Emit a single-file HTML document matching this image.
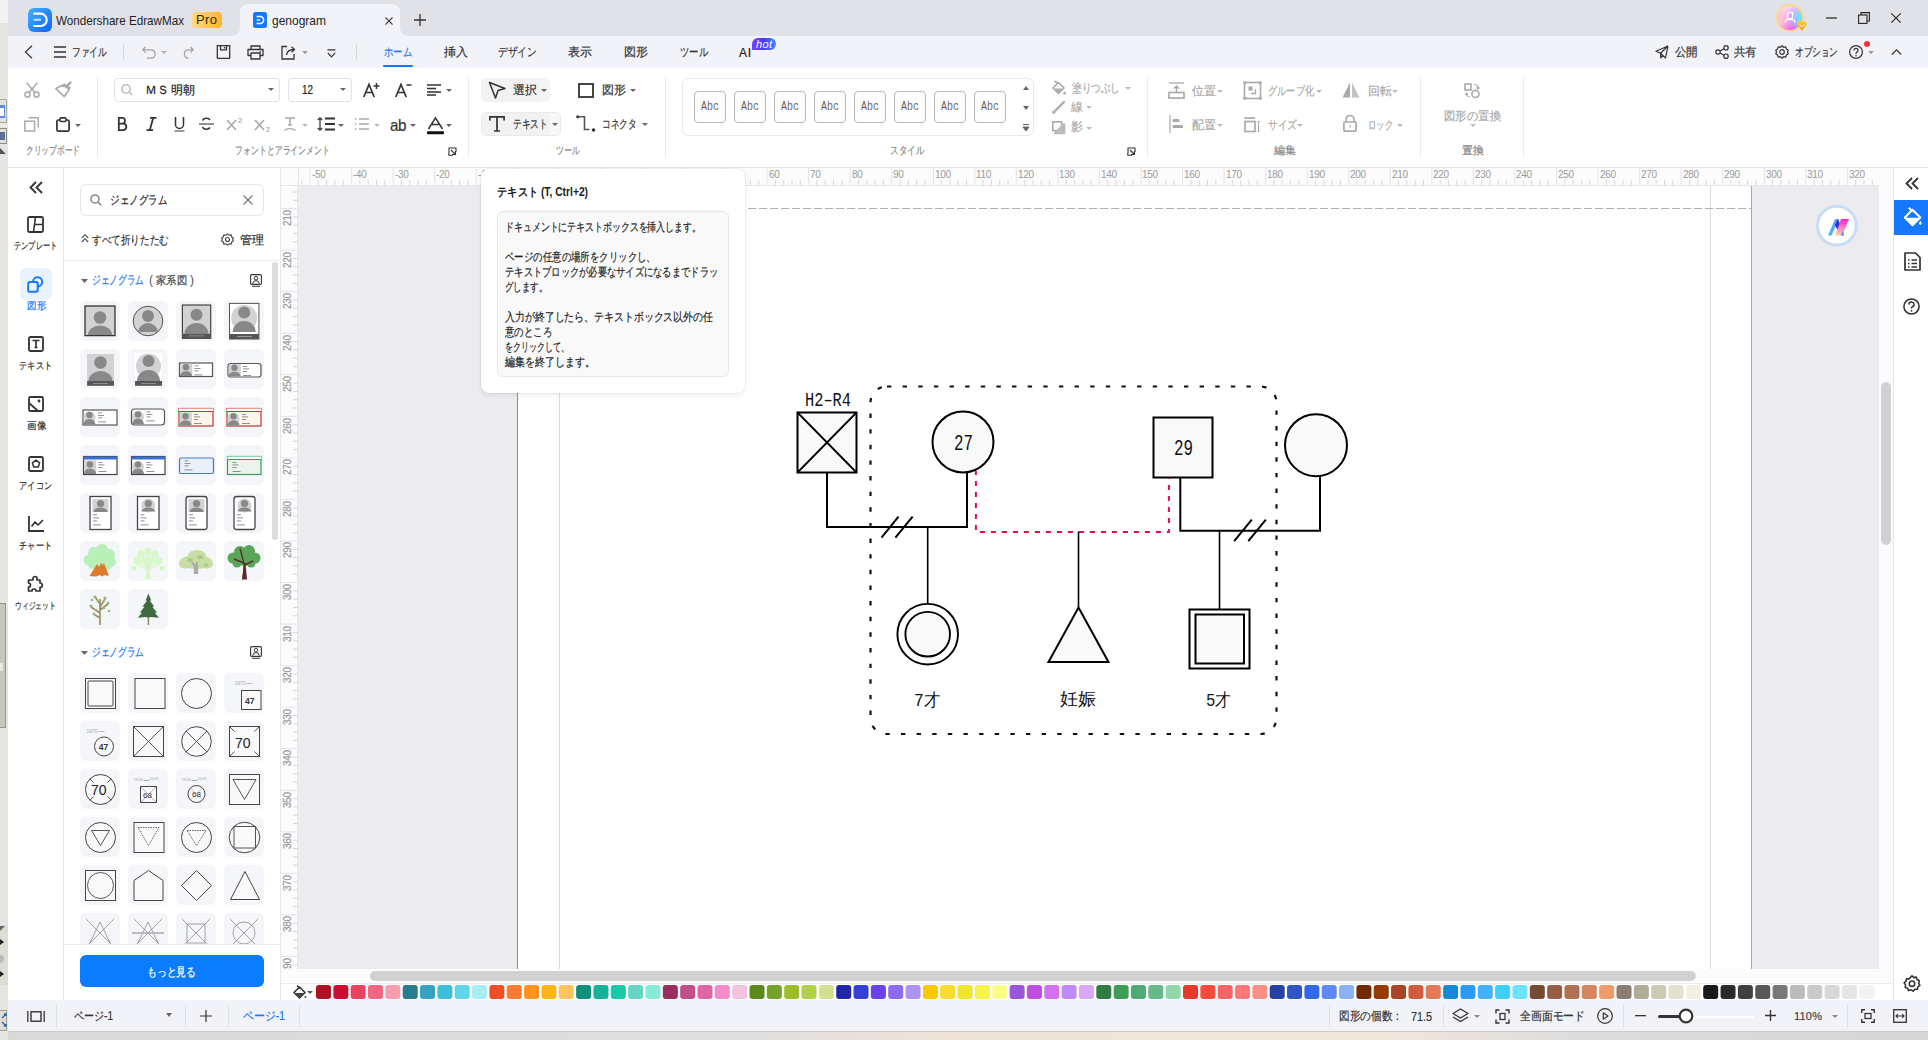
<!DOCTYPE html>
<html><head><meta charset="utf-8">
<style>
*{box-sizing:border-box;margin:0;padding:0}
html,body{width:1928px;height:1040px;overflow:hidden;background:#dadada;font-family:"Liberation Sans",sans-serif;color:#333;position:relative}
.a{position:absolute}
.t{position:absolute;white-space:nowrap;-webkit-text-stroke:0.2px currentColor}
svg{position:absolute;overflow:visible}
</style></head><body>
<div class="a" style="left:0px;top:0px;width:8px;height:23px;background:#f3f3f3;"></div>
<div class="a" style="left:0px;top:23px;width:8px;height:1017px;background:#e6e5e1;"></div>
<div class="a" style="left:8px;top:0px;width:1920px;height:36px;background:#e1e2e7;"></div>
<div class="a" style="left:8px;top:36px;width:1920px;height:32px;background:#f2f3f8;"></div>
<div class="a" style="left:8px;top:68px;width:1920px;height:100px;background:#fff;border-bottom:1px solid #e3e4e8;"></div>
<div class="a" style="left:8px;top:168px;width:56px;height:832px;background:#fff;border-right:1px solid #e6e7eb;"></div>
<div class="a" style="left:64px;top:168px;width:217px;height:832px;background:#fff;border-right:1px solid #e6e7eb;"></div>
<div class="a" style="left:281px;top:168px;width:1598px;height:18px;background:#fcfcfd;border-bottom:1px solid #e6e7eb;"></div>
<div class="a" style="left:281px;top:186px;width:17px;height:783px;background:#fcfcfd;border-right:1px solid #e6e7eb;"></div>
<div class="a" style="left:298px;top:186px;width:1581px;height:783px;background:#ebebf0;"></div>
<div class="a" style="left:517px;top:186px;width:1235px;height:783px;background:#fff;border-left:1px solid #8e8e8e;border-right:1px solid #a8a8a8;"></div>
<div class="a" style="left:559px;top:186px;width:1px;height:783px;background:#dcdcdc;"></div>
<div class="a" style="left:1710px;top:186px;width:1px;height:783px;background:#dcdcdc;"></div>
<svg style="left:748px;top:208px;" width="1003" height="1" viewBox="0 0 1003 1"><line x1="0" y1="0.5" x2="1003" y2="0.5" stroke="#b0b0b0" stroke-width="1.1" stroke-dasharray="8.2 2.8"/></svg>
<div class="a" style="left:1879px;top:168px;width:14px;height:801px;background:#fcfcfd;"></div>
<div class="a" style="left:1881px;top:382px;width:10px;height:163px;background:#d0d1d3;border-radius:5px;"></div>
<div class="a" style="left:281px;top:969px;width:1612px;height:15px;background:#fcfcfd;border-bottom:1px solid #ececf0;"></div>
<div class="a" style="left:370px;top:971px;width:1326px;height:10px;background:#d0d1d3;border-radius:5px;"></div>
<div class="a" style="left:281px;top:984px;width:1612px;height:16px;background:#fff;"></div>
<div class="a" style="left:1893px;top:168px;width:35px;height:832px;background:#fff;border-left:1px solid #e6e7eb;"></div>
<div class="a" style="left:8px;top:1000px;width:1920px;height:32px;background:#f2f3f8;border-bottom:1px solid #c9c9c9;"></div>
<div class="a" style="left:8px;top:1032px;width:1920px;height:8px;background:linear-gradient(to right,#d9d9d9 0%,#dedede 38%,#efe3d9 48%,#f1e6dc 72%,#dcdcdc 82%,#d6d6d6 100%);"></div>
<div class="a" style="left:0px;top:99px;width:7px;height:24px;background:#e3e2dc;border:1px solid #a9a79f;border-left:none;"></div>
<div class="a" style="left:0px;top:105px;width:5px;height:13px;background:#5b8ee0;"></div>
<div class="a" style="left:0px;top:108px;width:4px;height:8px;background:#fff;"></div>
<div class="a" style="left:0px;top:123px;width:7px;height:4px;background:#ecebe7;"></div>
<div class="a" style="left:0px;top:128px;width:7px;height:16px;background:#e0dfd9;border:1px solid #8f8d87;border-left:none;"></div>
<div class="a" style="left:0px;top:132px;width:5px;height:8px;background:#5d6f8f;"></div>
<svg style="left:0px;top:148px;" width="6" height="6" viewBox="0 0 6 6"><path d="M0 0 L6 6 H0 Z" fill="#555"/></svg>
<div class="a" style="left:0px;top:603px;width:6px;height:125px;background:#c7c6bf;border:1px solid #97958e;border-left:none;"></div>
<div class="a" style="left:0px;top:663px;width:3px;height:8px;background:#e8e8e4;"></div>
<div class="a" style="left:0px;top:925px;width:8px;height:60px;background:#dddcd6;"></div>
<svg style="left:0px;top:926px;" width="5" height="5" viewBox="0 0 5 5"><path d="M0 0 H5 L0 5 Z" fill="#666"/></svg>
<svg style="left:0px;top:939px;" width="4" height="6" viewBox="0 0 4 6"><path d="M0 0 L4 3 L0 6 Z" fill="#222"/></svg>
<div class="a" style="left:0px;top:955px;width:4px;height:8px;background:#bbb;border-radius:0 4px 4px 0;"></div>
<svg style="left:0px;top:971px;" width="4" height="6" viewBox="0 0 4 6"><path d="M0 0 L4 3 L0 6 Z" fill="#222"/></svg>
<div class="a" style="left:0px;top:1010px;width:7px;height:21px;background:#dedcd4;border:1px solid #9f9d96;border-left:none;"></div>
<svg style="left:1px;top:1012px;" width="6" height="16" viewBox="0 0 6 16"><path d="M1 6 L5 2 M3 2 H5 V4 M1 10 L5 14 M3 14 H5 V12" stroke="#2f5fa0" stroke-width="1.4" fill="none"/></svg>
<svg style="left:28px;top:8px;" width="24" height="24" viewBox="0 0 24 24"><defs><linearGradient id="lg1" x1="0" y1="0" x2="1" y2="1"><stop offset="0" stop-color="#45b0ff"/><stop offset="1" stop-color="#0866ff"/></linearGradient></defs>
<rect x="0" y="0" width="24" height="24" rx="6" fill="url(#lg1)"/>
<path d="M6.2 5.6 H12.5 A6.2 6.2 0 0 1 12.5 18 H6.2" fill="none" stroke="#fff" stroke-width="2.2" stroke-linecap="round"/>
<path d="M6.5 11.8 H12.2" stroke="#cfe3ff" stroke-width="2" stroke-linecap="round"/></svg>
<div class="t" style="transform:scaleX(0.896);transform-origin:0 0;left:56px;top:14px;font-size:13px;line-height:13px;color:#1f1f1f;-webkit-text-stroke:0;">Wondershare EdrawMax</div>
<svg style="left:192px;top:12px;" width="30" height="16" viewBox="0 0 30 16"><defs><linearGradient id="lg2" x1="0" y1="0" x2="1" y2="0"><stop offset="0" stop-color="#fed985"/><stop offset="1" stop-color="#fdb52c"/></linearGradient></defs><rect width="30" height="16" rx="4" fill="url(#lg2)"/></svg>
<div class="t" style="letter-spacing:0.38px;left:196px;top:13px;font-size:13px;line-height:13px;color:#3a2a00;-webkit-text-stroke:0;">Pro</div>
<svg style="left:232px;top:4px;" width="176" height="32" viewBox="0 0 176 32"><path d="M0 32 A8 8 0 0 0 8 24 V8 A8 8 0 0 1 16 0 H160 A8 8 0 0 1 168 8 V24 A8 8 0 0 0 176 32 Z" fill="#f2f3f8"/></svg>
<svg style="left:253px;top:12px;" width="14" height="16" viewBox="0 0 14 16"><rect x="0" y="0" width="14" height="16" rx="2.5" fill="#1677ff"/>
<path d="M3.6 4.6 H7.2 A3.4 3.4 0 0 1 7.2 11.4 H3.6" fill="none" stroke="#fff" stroke-width="1.5"/><path d="M3.8 8 H7" stroke="#fff" stroke-width="1.3"/></svg>
<div class="t" style="transform:scaleX(0.922);transform-origin:0 0;left:272px;top:14px;font-size:13px;line-height:13px;color:#222;-webkit-text-stroke:0;">genogram</div>
<svg style="left:385px;top:17px;" width="8" height="8" viewBox="0 0 8 8"><path d="M0.5 0.5 L7.5 7.5 M7.5 0.5 L0.5 7.5" stroke="#444" stroke-width="1.1"/></svg>
<svg style="left:414px;top:14px;" width="12" height="12" viewBox="0 0 12 12"><path d="M6 0 V12 M0 6 H12" stroke="#333" stroke-width="1.3"/></svg>
<svg style="left:1776px;top:4px;" width="34" height="30" viewBox="0 0 34 30"><defs><linearGradient id="lg3" x1="0.3" y1="0" x2="0.5" y2="1"><stop offset="0" stop-color="#fbe6fb"/><stop offset="0.5" stop-color="#f6a0e8"/><stop offset="1" stop-color="#ee50f2"/></linearGradient>
<radialGradient id="lg3b" cx="1" cy="0.5" r="0.7"><stop offset="0" stop-color="#40ffff" stop-opacity="1"/><stop offset="0.45" stop-color="#8ad0ff" stop-opacity="0.7"/><stop offset="1" stop-color="#c0a0ff" stop-opacity="0"/></radialGradient>
<radialGradient id="lg3c" cx="0" cy="0.7" r="0.6"><stop offset="0" stop-color="#ffd8c8" stop-opacity="0.9"/><stop offset="1" stop-color="#ffd8c8" stop-opacity="0"/></radialGradient>
<linearGradient id="lg4" x1="0" y1="0" x2="0" y2="1"><stop offset="0" stop-color="#ffd43a"/><stop offset="1" stop-color="#ff9500"/></linearGradient></defs>
<circle cx="14" cy="14" r="13" fill="url(#lg3)" stroke="#fdd98c" stroke-width="2"/>
<circle cx="14" cy="14" r="12" fill="url(#lg3b)"/>
<circle cx="14" cy="14" r="12" fill="url(#lg3c)"/>
<path d="M13 8.6 H16.6 V12.4 A2.4 2.4 0 0 1 14.2 14.8 H13.8 A2.4 2.4 0 0 1 11.4 12.4 V10.8 A2.2 2.2 0 0 1 13 8.6 Z" fill="none" stroke="#fff" stroke-width="1.1"/>
<path d="M9.2 19 V18.2 A2.6 2.6 0 0 1 11.8 15.6 H16.2 A2.6 2.6 0 0 1 18.8 18.2 V19" fill="none" stroke="#fff" stroke-width="1.1"/>
<path d="M22.5 17 L29 17 L31 20 L26 27 L21 20 Z" fill="url(#lg4)"/>
<path d="M23.6 20.6 L26 23 L28.4 20.6" fill="none" stroke="#fff" stroke-width="1"/></svg>
<svg style="left:1826px;top:17px;" width="11" height="2" viewBox="0 0 11 2"><rect width="11" height="1.2" y="0.4" fill="#222"/></svg>
<svg style="left:1858px;top:12px;" width="12" height="12" viewBox="0 0 12 12"><rect x="0.6" y="3" width="8.4" height="8.4" fill="none" stroke="#222" stroke-width="1.1"/><path d="M3 3 V0.6 H11.4 V9 H9" fill="none" stroke="#222" stroke-width="1.1"/></svg>
<svg style="left:1891px;top:13px;" width="10" height="10" viewBox="0 0 10 10"><path d="M0.3 0.3 L9.7 9.7 M9.7 0.3 L0.3 9.7" stroke="#222" stroke-width="1.1"/></svg>
<svg style="left:24px;top:45px;" width="9" height="14" viewBox="0 0 9 14"><path d="M8 0.8 L1.5 7 L8 13.2" fill="none" stroke="#333" stroke-width="1.2"/></svg>
<svg style="left:54px;top:46px;" width="12" height="12" viewBox="0 0 12 12"><path d="M0 1 H12 M0 6 H12 M0 11 H12" stroke="#333" stroke-width="1.3"/></svg>
<div class="t" style="transform:scaleX(0.729);transform-origin:0 0;left:72px;top:46px;font-size:12px;line-height:12px;color:#333;">ファイル</div>
<div class="a" style="left:123px;top:44px;width:1px;height:16px;background:#d6d7db;"></div>
<svg style="left:142px;top:46px;" width="15" height="12" viewBox="0 0 15 12"><path d="M3.5 1 L0.8 3.8 L3.5 6.6 M1 3.8 H9 A4.2 4.2 0 0 1 9 12.2 H5" fill="none" stroke="#a0a0a0" stroke-width="1.2"/></svg>
<svg style="left:161px;top:51px;" width="6" height="3" viewBox="0 0 6 3"><path d="M0 0 H6 L3 3 Z" fill="#b0b0b0"/></svg>
<svg style="left:184px;top:46px;" width="10" height="12" viewBox="0 0 10 12"><path d="M6.5 1 L9.2 3.8 L6.5 6.6 M9 3.8 H4.5 A4.2 4.2 0 0 0 4.5 12.2" fill="none" stroke="#a0a0a0" stroke-width="1.2"/></svg>
<svg style="left:216px;top:45px;" width="15" height="14" viewBox="0 0 15 14"><path d="M1.3 0.7 H13.7 V12.7 A0.6 0.6 0 0 1 13.1 13.3 H1.9 A0.6 0.6 0 0 1 1.3 12.7 Z M4.5 0.7 V4.8 H10.5 V0.7 M8.5 2 V3.6" fill="none" stroke="#333" stroke-width="1.3"/></svg>
<svg style="left:247px;top:45px;" width="17" height="15" viewBox="0 0 17 15"><path d="M4 4.5 V1 H13 V4.5 M4 10.5 H1 V4.5 H16 V10.5 H13 M4 8 H13 V14 H4 Z" fill="none" stroke="#333" stroke-width="1.3" stroke-linejoin="round"/><circle cx="13.3" cy="6.8" r="0.7" fill="#333"/></svg>
<svg style="left:281px;top:45px;" width="15" height="15" viewBox="0 0 15 15"><path d="M6 1.5 H1 V14 H13 V9" fill="none" stroke="#333" stroke-width="1.3"/><path d="M5.5 10 C6 6 8.5 4.5 13 4.5 M10.5 1.8 L13.5 4.5 L10.5 7.2" fill="none" stroke="#333" stroke-width="1.3"/></svg>
<svg style="left:302px;top:51px;" width="6" height="3" viewBox="0 0 6 3"><path d="M0 0 H6 L3 3 Z" fill="#999"/></svg>
<svg style="left:327px;top:49px;" width="9" height="9" viewBox="0 0 9 9"><path d="M0.5 0.8 H8.5 M0.8 3.8 L4.5 7.8 L8.2 3.8" fill="none" stroke="#333" stroke-width="1.2"/></svg>
<div class="a" style="left:356px;top:44px;width:1px;height:16px;background:#d6d7db;"></div>
<div class="t" style="transform:scaleX(0.778);transform-origin:0 0;left:384px;top:46px;font-size:12px;line-height:12px;color:#1677ff;">ホーム</div>
<div class="a" style="left:383px;top:65px;width:30px;height:2px;background:#1677ff;border-radius:1px;"></div>
<div class="t" style="letter-spacing:0.00px;left:444px;top:46px;font-size:12px;line-height:12px;color:#333;">挿入</div>
<div class="t" style="transform:scaleX(0.812);transform-origin:0 0;left:498px;top:46px;font-size:12px;line-height:12px;color:#333;">デザイン</div>
<div class="t" style="letter-spacing:0.00px;left:568px;top:46px;font-size:12px;line-height:12px;color:#333;">表示</div>
<div class="t" style="letter-spacing:0.00px;left:624px;top:46px;font-size:12px;line-height:12px;color:#333;">図形</div>
<div class="t" style="transform:scaleX(0.778);transform-origin:0 0;left:680px;top:46px;font-size:12px;line-height:12px;color:#333;">ツール</div>
<div class="t" style="letter-spacing:0.66px;left:739px;top:47px;font-size:12px;line-height:12px;color:#222;">AI</div>
<svg style="left:752px;top:38px;" width="24" height="12" viewBox="0 0 24 12"><defs><linearGradient id="hotg" x1="0" y1="0" x2="1" y2="0"><stop offset="0" stop-color="#7a3cff"/><stop offset="0.5" stop-color="#4a3cff"/><stop offset="1" stop-color="#3a8aff"/></linearGradient></defs><path d="M0 6 A6 6 0 0 1 6 0 H18 A6 6 0 0 1 18 12 H0 Z" fill="url(#hotg)"/></svg>
<div class="t" style="letter-spacing:0.35px;left:756px;top:39px;font-size:11px;line-height:11px;color:#fff;font-style:italic;-webkit-text-stroke:0;">hot</div>
<svg style="left:1655px;top:45px;" width="14" height="14" viewBox="0 0 14 14"><path d="M13 1 L1 6.2 L5.5 8.3 L5.8 13 L8 9.8 M13 1 L5.5 8.3 M13 1 L10.5 13 L5.5 8.3" fill="none" stroke="#333" stroke-width="1.2" stroke-linejoin="round"/></svg>
<div class="t" style="transform:scaleX(0.958);transform-origin:0 0;left:1675px;top:46px;font-size:12px;line-height:12px;color:#333;">公開</div>
<svg style="left:1715px;top:45px;" width="14" height="14" viewBox="0 0 14 14"><circle cx="3" cy="7" r="2.2" fill="none" stroke="#333" stroke-width="1.2"/><circle cx="11" cy="2.8" r="2.2" fill="none" stroke="#333" stroke-width="1.2"/><circle cx="11" cy="11.2" r="2.2" fill="none" stroke="#333" stroke-width="1.2"/><path d="M5 6 L9 3.8 M5 8 L9 10.2" stroke="#333" stroke-width="1.2"/></svg>
<div class="t" style="transform:scaleX(0.958);transform-origin:0 0;left:1734px;top:46px;font-size:12px;line-height:12px;color:#333;">共有</div>
<svg style="left:1775px;top:45px;" width="14" height="14" viewBox="0 0 14 14"><path d="M7 0.8 L8.6 2.3 L10.8 1.9 L11.4 4 L13.3 5.2 L12.4 7 L13.3 8.8 L11.4 10 L10.8 12.1 L8.6 11.7 L7 13.2 L5.4 11.7 L3.2 12.1 L2.6 10 L0.7 8.8 L1.6 7 L0.7 5.2 L2.6 4 L3.2 1.9 L5.4 2.3 Z" fill="none" stroke="#333" stroke-width="1.2" stroke-linejoin="round"/><circle cx="7" cy="7" r="2.3" fill="none" stroke="#333" stroke-width="1.2"/></svg>
<div class="t" style="transform:scaleX(0.717);transform-origin:0 0;left:1795px;top:46px;font-size:12px;line-height:12px;color:#333;">オプション</div>
<svg style="left:1849px;top:45px;" width="14" height="14" viewBox="0 0 14 14"><circle cx="7" cy="7" r="6.4" fill="none" stroke="#333" stroke-width="1.2"/><path d="M4.9 5.4 A2.1 2.1 0 1 1 7.6 7.4 C7 7.7 7 8.2 7 8.9" fill="none" stroke="#333" stroke-width="1.2"/><circle cx="7" cy="10.7" r="0.8" fill="#333"/></svg>
<svg style="left:1864px;top:41px;" width="6" height="6" viewBox="0 0 6 6"><circle cx="3" cy="3" r="3" fill="#f5323c"/></svg>
<svg style="left:1868px;top:51px;" width="6" height="3" viewBox="0 0 6 3"><path d="M0 0 H6 L3 3 Z" fill="#999"/></svg>
<svg style="left:1891px;top:49px;" width="11" height="6" viewBox="0 0 11 6"><path d="M0.8 5.5 L5.5 0.8 L10.2 5.5" fill="none" stroke="#333" stroke-width="1.2"/></svg>
<div class="a" style="left:97px;top:78px;width:1px;height:80px;background:#ececef;"></div>
<div class="a" style="left:468px;top:78px;width:1px;height:80px;background:#ececef;"></div>
<div class="a" style="left:665px;top:78px;width:1px;height:80px;background:#ececef;"></div>
<div class="a" style="left:1147px;top:78px;width:1px;height:80px;background:#ececef;"></div>
<div class="a" style="left:1420px;top:78px;width:1px;height:80px;background:#ececef;"></div>
<div class="a" style="left:1523px;top:78px;width:1px;height:80px;background:#ececef;"></div>
<svg style="left:24px;top:82px;" width="16" height="16" viewBox="0 0 16 16"><circle cx="3.5" cy="12.5" r="2.6" fill="none" stroke="#aaa" stroke-width="1.5"/><circle cx="12.5" cy="12.5" r="2.6" fill="none" stroke="#aaa" stroke-width="1.5"/><path d="M5 10.5 L13.5 0.8 M11 10.5 L2.5 0.8" stroke="#aaa" stroke-width="1.5"/></svg>
<svg style="left:55px;top:81px;" width="17" height="17" viewBox="0 0 17 17"><path d="M0.9 7.6 L8 4 L14.2 8.4 L9.3 15.6 Z" fill="none" stroke="#aaa" stroke-width="1.7" stroke-linejoin="round"/><path d="M7.5 3.8 L14.5 8.5 L15.8 6.6 L9.2 2.2 Z" fill="#aaa"/><path d="M12.8 4.2 L15.3 1.6" stroke="#aaa" stroke-width="2.6" stroke-linecap="round"/></svg>
<svg style="left:24px;top:117px;" width="15" height="15" viewBox="0 0 15 15"><rect x="0.8" y="4.2" width="9.8" height="9.8" fill="none" stroke="#aaa" stroke-width="1.5"/><path d="M4.6 0.8 H14.2 V10.6" fill="none" stroke="#aaa" stroke-width="1.5"/></svg>
<svg style="left:56px;top:117px;" width="14" height="15" viewBox="0 0 14 15"><rect x="0.9" y="3" width="12.2" height="11.2" rx="1.5" fill="none" stroke="#333" stroke-width="1.7"/><rect x="4" y="0.9" width="6" height="3.6" rx="1" fill="#fff" stroke="#333" stroke-width="1.6"/></svg>
<svg style="left:75px;top:124px;" width="6" height="3" viewBox="0 0 6 3"><path d="M0 0 H6 L3 3 Z" fill="#666"/></svg>
<div class="t" style="transform:scaleX(0.701);transform-origin:0 0;left:26px;top:145px;font-size:11px;line-height:11px;color:#888;">クリップボード</div>
<div class="a" style="left:114px;top:78px;width:166px;height:24px;background:#fff;border:1px solid #e2e2e6;border-radius:4px;"></div>
<svg style="left:121px;top:84px;" width="12" height="12" viewBox="0 0 12 12"><circle cx="5" cy="5" r="4.2" fill="none" stroke="#bbb" stroke-width="1.5"/><path d="M8 8 L11 11" stroke="#bbb" stroke-width="1.6"/></svg>
<div class="t" style="letter-spacing:-0.34px;left:145px;top:84px;font-size:12px;line-height:12px;color:#222;">ＭＳ 明朝</div>
<svg style="left:268px;top:88px;" width="6" height="3" viewBox="0 0 6 3"><path d="M0 0 H6 L3 3 Z" fill="#666"/></svg>
<div class="a" style="left:288px;top:78px;width:64px;height:24px;background:#fff;border:1px solid #e2e2e6;border-radius:4px;"></div>
<div class="t" style="transform:scaleX(0.823);transform-origin:0 0;left:302px;top:84px;font-size:12px;line-height:12px;color:#222;">12</div>
<svg style="left:340px;top:88px;" width="6" height="3" viewBox="0 0 6 3"><path d="M0 0 H6 L3 3 Z" fill="#666"/></svg>
<svg style="left:363px;top:83px;" width="17" height="15" viewBox="0 0 17 15"><path d="M0.8 14 L6 1.5 L11.2 14 M2.8 9.5 H9.2" fill="none" stroke="#333" stroke-width="1.7"/><path d="M13.5 0 V6 M10.5 3 H16.5" stroke="#333" stroke-width="1.5"/></svg>
<svg style="left:395px;top:83px;" width="17" height="15" viewBox="0 0 17 15"><path d="M0.8 14 L6 1.5 L11.2 14 M2.8 9.5 H9.2" fill="none" stroke="#333" stroke-width="1.7"/><path d="M11.5 2 H16.5" stroke="#333" stroke-width="1.5"/></svg>
<svg style="left:427px;top:84px;" width="15" height="12" viewBox="0 0 15 12"><path d="M0 1 H14 M0 4.5 H9 M0 8 H14 M0 11 H9" stroke="#333" stroke-width="1.5"/></svg>
<svg style="left:446px;top:89px;" width="6" height="3" viewBox="0 0 6 3"><path d="M0 0 H6 L3 3 Z" fill="#666"/></svg>
<svg style="left:117px;top:117px;" width="11" height="14" viewBox="0 0 11 14"><path d="M1.8 0.9 H6 A3 3 0 0 1 6 6.6 H1.8 Z M1.8 6.6 H6.6 A3.3 3.3 0 0 1 6.6 13.1 H1.8 Z" fill="none" stroke="#333" stroke-width="1.8"/></svg>
<svg style="left:146px;top:117px;" width="11" height="14" viewBox="0 0 11 14"><path d="M4 0.9 H10.5 M0.5 13.1 H7 M7.2 0.9 L3.8 13.1" stroke="#333" stroke-width="1.8"/></svg>
<svg style="left:174px;top:117px;" width="11" height="15" viewBox="0 0 11 15"><path d="M1.5 0 V7.5 A4 4 0 0 0 9.5 7.5 V0" fill="none" stroke="#333" stroke-width="1.5"/><path d="M0.5 14 H10.5" stroke="#333" stroke-width="1"/></svg>
<svg style="left:199px;top:117px;" width="15" height="14" viewBox="0 0 15 14"><path d="M11 3 A4 3 0 0 0 3.5 3.5 M3.5 10 A4 3 0 0 0 11 10.5" fill="none" stroke="#333" stroke-width="1.6"/><path d="M0 7 H15" stroke="#333" stroke-width="1.1"/></svg>
<svg style="left:226px;top:119px;" width="17" height="12" viewBox="0 0 17 12"><path d="M1 1 L10 11 M10 1 L1 11" stroke="#aaa" stroke-width="1.7"/></svg>
<div class="t" style="left:238px;top:117px;font-size:7px;line-height:7px;color:#aaa;">2</div>
<svg style="left:254px;top:119px;" width="17" height="12" viewBox="0 0 17 12"><path d="M1 1 L10 11 M10 1 L1 11" stroke="#aaa" stroke-width="1.7"/></svg>
<div class="t" style="left:266px;top:126px;font-size:7px;line-height:7px;color:#aaa;">2</div>
<svg style="left:284px;top:117px;" width="12" height="14" viewBox="0 0 12 14"><path d="M1 1 H11 M6 1 V8 M4 8 H8" stroke="#aaa" stroke-width="1.6"/><path d="M0.5 13.5 A6 3 0 0 1 11.5 13.5" fill="none" stroke="#aaa" stroke-width="1.2"/></svg>
<svg style="left:302px;top:124px;" width="6" height="3" viewBox="0 0 6 3"><path d="M0 0 H6 L3 3 Z" fill="#bbb"/></svg>
<svg style="left:317px;top:117px;" width="18" height="14" viewBox="0 0 18 14"><path d="M3 0.8 V13.2 M0.8 3 L3 0.8 L5.2 3 M0.8 11 L3 13.2 L5.2 11" fill="none" stroke="#333" stroke-width="1.2"/><path d="M8 1.5 H18 M8 7 H18 M8 12.5 H18" stroke="#333" stroke-width="1.8"/></svg>
<svg style="left:338px;top:124px;" width="6" height="3" viewBox="0 0 6 3"><path d="M0 0 H6 L3 3 Z" fill="#666"/></svg>
<svg style="left:355px;top:118px;" width="15" height="12" viewBox="0 0 15 12"><path d="M0 1 H1.5 M4 1 H14 M0 6 H1.5 M4 6 H14 M0 11 H1.5 M4 11 H14" stroke="#aaa" stroke-width="1.5"/></svg>
<svg style="left:374px;top:124px;" width="6" height="3" viewBox="0 0 6 3"><path d="M0 0 H6 L3 3 Z" fill="#bbb"/></svg>
<div class="t" style="transform:scaleX(0.893);transform-origin:0 0;left:390px;top:117px;font-size:17px;line-height:17px;color:#333;letter-spacing:-0.5px;">ab</div>
<svg style="left:410px;top:124px;" width="6" height="3" viewBox="0 0 6 3"><path d="M0 0 H6 L3 3 Z" fill="#666"/></svg>
<svg style="left:427px;top:117px;" width="17" height="18" viewBox="0 0 17 18"><path d="M1.5 12 L8.5 0.8 L15.5 12 M4.5 7.5 H12.5" fill="none" stroke="#333" stroke-width="1.5"/><rect x="0" y="14.2" width="17" height="3" rx="1" fill="#111"/></svg>
<svg style="left:446px;top:124px;" width="6" height="3" viewBox="0 0 6 3"><path d="M0 0 H6 L3 3 Z" fill="#666"/></svg>
<svg style="left:448px;top:147px;" width="9" height="9" viewBox="0 0 9 9"><path d="M1 6 V1 H8 V5 M3 3 L7 7 M4 7.5 H7.5 V4" fill="none" stroke="#333" stroke-width="1.1"/><path d="M0.8 6 V8.2 H5" fill="none" stroke="#333" stroke-width="1.1"/></svg>
<div class="t" style="transform:scaleX(0.720);transform-origin:0 0;left:235px;top:145px;font-size:11px;line-height:11px;color:#888;">フォントとアラインメント</div>
<div class="a" style="left:481px;top:78px;width:69px;height:24px;background:#f2f2f3;border-radius:5px;"></div>
<div class="a" style="left:539px;top:78px;width:11px;height:24px;background:#f5f5f6;border-radius:0 5px 5px 0;"></div>
<svg style="left:488px;top:81px;" width="19" height="19" viewBox="0 0 19 19"><path d="M1.5 1.5 L17 7.5 L10 9.5 L7.5 17 Z" fill="none" stroke="#333" stroke-width="1.5" stroke-linejoin="round"/></svg>
<div class="t" style="letter-spacing:0.00px;left:513px;top:84px;font-size:12px;line-height:12px;color:#333;">選択</div>
<svg style="left:541px;top:89px;" width="6" height="3" viewBox="0 0 6 3"><path d="M0 0 H6 L3 3 Z" fill="#666"/></svg>
<div class="a" style="left:481px;top:112px;width:80px;height:24px;background:#f2f2f3;border:1px solid #eaeaea;border-radius:5px;"></div>
<div class="a" style="left:550px;top:113px;width:10px;height:22px;background:#f7f7f8;border-radius:0 4px 4px 0;"></div>
<svg style="left:489px;top:116px;" width="16" height="16" viewBox="0 0 16 16"><path d="M0.9 4.5 V0.9 H15.1 V4.5 M8 0.9 V15 M5 15 H11" fill="none" stroke="#333" stroke-width="1.7"/></svg>
<div class="t" style="transform:scaleX(0.729);transform-origin:0 0;left:513px;top:118px;font-size:12px;line-height:12px;color:#333;">テキスト</div>
<svg style="left:552px;top:123px;" width="6" height="3" viewBox="0 0 6 3"><path d="M0 0 H6 L3 3 Z" fill="#666"/></svg>
<svg style="left:578px;top:83px;" width="16" height="15" viewBox="0 0 16 15"><rect x="1" y="1" width="14" height="13" fill="none" stroke="#333" stroke-width="1.8"/></svg>
<div class="t" style="letter-spacing:0.00px;left:602px;top:84px;font-size:12px;line-height:12px;color:#333;">図形</div>
<svg style="left:630px;top:89px;" width="6" height="3" viewBox="0 0 6 3"><path d="M0 0 H6 L3 3 Z" fill="#666"/></svg>
<svg style="left:576px;top:115px;" width="20" height="18" viewBox="0 0 20 18"><circle cx="1.8" cy="1.8" r="1.6" fill="#333"/><path d="M1.8 1.8 H8.5 V14.5 H13.5" fill="none" stroke="#555" stroke-width="1.6"/><circle cx="17.5" cy="15" r="1.8" fill="#333"/></svg>
<div class="t" style="transform:scaleX(0.729);transform-origin:0 0;left:602px;top:118px;font-size:12px;line-height:12px;color:#333;">コネクタ</div>
<svg style="left:642px;top:123px;" width="6" height="3" viewBox="0 0 6 3"><path d="M0 0 H6 L3 3 Z" fill="#666"/></svg>
<div class="t" style="transform:scaleX(0.727);transform-origin:0 0;left:556px;top:145px;font-size:11px;line-height:11px;color:#888;">ツール</div>
<div class="a" style="left:682px;top:78px;width:352px;height:58px;background:#fff;border:1px solid #e8e8ea;border-radius:6px;"></div>
<div class="a" style="left:694px;top:91px;width:32px;height:32px;background:#fdfdfd;border:1px solid #b9b9b9;border-radius:4px;"></div>
<div class="t" style="transform:scaleX(0.833);transform-origin:0 0;left:701px;top:101px;font-size:12px;line-height:12px;color:#555;font-family:'Liberation Mono',sans-serif;-webkit-text-stroke:0.1px #fff;">Abc</div>
<div class="a" style="left:734px;top:91px;width:32px;height:32px;background:#fdfdfd;border:1px solid #b9b9b9;border-radius:4px;"></div>
<div class="t" style="transform:scaleX(0.833);transform-origin:0 0;left:741px;top:101px;font-size:12px;line-height:12px;color:#555;font-family:'Liberation Mono',sans-serif;-webkit-text-stroke:0.1px #fff;">Abc</div>
<div class="a" style="left:774px;top:91px;width:32px;height:32px;background:#fdfdfd;border:1px solid #b9b9b9;border-radius:4px;"></div>
<div class="t" style="transform:scaleX(0.833);transform-origin:0 0;left:781px;top:101px;font-size:12px;line-height:12px;color:#555;font-family:'Liberation Mono',sans-serif;-webkit-text-stroke:0.1px #fff;">Abc</div>
<div class="a" style="left:814px;top:91px;width:32px;height:32px;background:#fdfdfd;border:1px solid #b9b9b9;border-radius:4px;"></div>
<div class="t" style="transform:scaleX(0.833);transform-origin:0 0;left:821px;top:101px;font-size:12px;line-height:12px;color:#555;font-family:'Liberation Mono',sans-serif;-webkit-text-stroke:0.1px #fff;">Abc</div>
<div class="a" style="left:854px;top:91px;width:32px;height:32px;background:#fdfdfd;border:1px solid #b9b9b9;border-radius:4px;"></div>
<div class="t" style="transform:scaleX(0.833);transform-origin:0 0;left:861px;top:101px;font-size:12px;line-height:12px;color:#555;font-family:'Liberation Mono',sans-serif;-webkit-text-stroke:0.1px #fff;">Abc</div>
<div class="a" style="left:894px;top:91px;width:32px;height:32px;background:#fdfdfd;border:1px solid #b9b9b9;border-radius:4px;"></div>
<div class="t" style="transform:scaleX(0.833);transform-origin:0 0;left:901px;top:101px;font-size:12px;line-height:12px;color:#555;font-family:'Liberation Mono',sans-serif;-webkit-text-stroke:0.1px #fff;">Abc</div>
<div class="a" style="left:934px;top:91px;width:32px;height:32px;background:#fdfdfd;border:1px solid #b9b9b9;border-radius:4px;"></div>
<div class="t" style="transform:scaleX(0.833);transform-origin:0 0;left:941px;top:101px;font-size:12px;line-height:12px;color:#555;font-family:'Liberation Mono',sans-serif;-webkit-text-stroke:0.1px #fff;">Abc</div>
<div class="a" style="left:974px;top:91px;width:32px;height:32px;background:#fdfdfd;border:1px solid #b9b9b9;border-radius:4px;"></div>
<div class="t" style="transform:scaleX(0.833);transform-origin:0 0;left:981px;top:101px;font-size:12px;line-height:12px;color:#555;font-family:'Liberation Mono',sans-serif;-webkit-text-stroke:0.1px #fff;">Abc</div>
<svg style="left:1023px;top:86px;" width="6" height="4" viewBox="0 0 6 4"><path d="M0 4 H6 L3 0 Z" fill="#666"/></svg>
<svg style="left:1023px;top:106px;" width="6" height="4" viewBox="0 0 6 4"><path d="M0 0 H6 L3 4 Z" fill="#666"/></svg>
<svg style="left:1023px;top:124px;" width="6" height="7" viewBox="0 0 6 7"><path d="M0 0.5 H6 M0 3 H6 L3 7 Z" stroke="#666" stroke-width="1" fill="#666"/></svg>
<div class="t" style="transform:scaleX(0.773);transform-origin:0 0;left:890px;top:145px;font-size:11px;line-height:11px;color:#888;">スタイル</div>
<svg style="left:1052px;top:80px;" width="14" height="15" viewBox="0 0 14 15"><path d="M2.5 1 L6 3.5 M1 8 L6.5 2.5 L12 8 L6.5 13.5 Z" fill="none" stroke="#aaa" stroke-width="1.6" stroke-linejoin="round"/><path d="M2 8.5 H11 L6.5 13 Z" fill="#aaa"/><circle cx="12.5" cy="13" r="1.5" fill="#aaa"/></svg>
<div class="t" style="transform:scaleX(0.800);transform-origin:0 0;left:1072px;top:82px;font-size:12px;line-height:12px;color:#aaa;">塗りつぶし</div>
<svg style="left:1125px;top:87px;" width="6" height="3" viewBox="0 0 6 3"><path d="M0 0 H6 L3 3 Z" fill="#bbb"/></svg>
<svg style="left:1052px;top:101px;" width="13" height="13" viewBox="0 0 13 13"><path d="M12 1 L3.5 9.5" stroke="#aaa" stroke-width="2.4" stroke-linecap="round"/><circle cx="1.8" cy="11.2" r="1.6" fill="#aaa"/></svg>
<div class="t" style="left:1071px;top:101px;font-size:12px;line-height:12px;color:#aaa;">線</div>
<svg style="left:1086px;top:106px;" width="6" height="3" viewBox="0 0 6 3"><path d="M0 0 H6 L3 3 Z" fill="#bbb"/></svg>
<svg style="left:1052px;top:121px;" width="13" height="13" viewBox="0 0 13 13"><rect x="0.8" y="0.8" width="8.8" height="8.8" fill="none" stroke="#aaa" stroke-width="1.6"/><path d="M10.6 3 H12.5 V12.5 H3 V10.6" fill="#bbb" stroke="#bbb" stroke-width="1.6"/></svg>
<div class="t" style="left:1071px;top:121px;font-size:12px;line-height:12px;color:#aaa;">影</div>
<svg style="left:1086px;top:127px;" width="6" height="3" viewBox="0 0 6 3"><path d="M0 0 H6 L3 3 Z" fill="#bbb"/></svg>
<svg style="left:1127px;top:147px;" width="9" height="9" viewBox="0 0 9 9"><path d="M1 6 V1 H8 V5 M3 3 L7 7 M4 7.5 H7.5 V4" fill="none" stroke="#333" stroke-width="1.1"/><path d="M0.8 6 V8.2 H5" fill="none" stroke="#333" stroke-width="1.1"/></svg>
<svg style="left:1168px;top:82px;" width="17" height="17" viewBox="0 0 17 17"><path d="M1 1 H16" stroke="#aaa" stroke-width="1.3"/><rect x="1" y="10.5" width="15" height="5.5" fill="none" stroke="#aaa" stroke-width="1.7"/><path d="M8.5 10 V4 M6 6.5 L8.5 4 L11 6.5" fill="none" stroke="#aaa" stroke-width="1.5"/></svg>
<div class="t" style="letter-spacing:0.00px;left:1192px;top:85px;font-size:12px;line-height:12px;color:#aaa;">位置</div>
<svg style="left:1217px;top:90px;" width="6" height="3" viewBox="0 0 6 3"><path d="M0 0 H6 L3 3 Z" fill="#bbb"/></svg>
<svg style="left:1243px;top:81px;" width="19" height="19" viewBox="0 0 19 19"><rect x="1.5" y="1.5" width="16" height="16" fill="none" stroke="#aaa" stroke-width="1.6"/><circle cx="1.8" cy="1.8" r="1.6" fill="#aaa"/><circle cx="17.2" cy="1.8" r="1.6" fill="#aaa"/><circle cx="1.8" cy="17.2" r="1.6" fill="#aaa"/><circle cx="17.2" cy="17.2" r="1.6" fill="#aaa"/><rect x="5.5" y="5.5" width="4" height="4" fill="#aaa"/><path d="M8 12.5 H12.5 V8" fill="none" stroke="#aaa" stroke-width="1.4"/></svg>
<div class="t" style="transform:scaleX(0.767);transform-origin:0 0;left:1268px;top:85px;font-size:12px;line-height:12px;color:#aaa;">グループ化</div>
<svg style="left:1316px;top:90px;" width="6" height="3" viewBox="0 0 6 3"><path d="M0 0 H6 L3 3 Z" fill="#bbb"/></svg>
<svg style="left:1169px;top:115px;" width="15" height="18" viewBox="0 0 15 18"><path d="M1 0 V18" stroke="#bbb" stroke-width="1.5"/><rect x="3.5" y="4" width="7" height="3" rx="1" fill="#aaa"/><rect x="3.5" y="10" width="10.5" height="3" rx="1" fill="#aaa"/></svg>
<div class="t" style="letter-spacing:0.00px;left:1192px;top:119px;font-size:12px;line-height:12px;color:#aaa;">配置</div>
<svg style="left:1217px;top:124px;" width="6" height="3" viewBox="0 0 6 3"><path d="M0 0 H6 L3 3 Z" fill="#bbb"/></svg>
<svg style="left:1244px;top:116px;" width="17" height="17" viewBox="0 0 17 17"><path d="M1 1 V2.5 H10.5 V1 M1 1.75 H10.5" fill="none" stroke="#aaa" stroke-width="1"/><rect x="1" y="5.5" width="10" height="10" fill="none" stroke="#aaa" stroke-width="1.7"/><path d="M14.5 5 V16 M13.3 5.5 H15.7 M13.3 15.5 H15.7" stroke="#aaa" stroke-width="1"/></svg>
<div class="t" style="transform:scaleX(0.806);transform-origin:0 0;left:1268px;top:119px;font-size:12px;line-height:12px;color:#aaa;">サイズ</div>
<svg style="left:1297px;top:124px;" width="6" height="3" viewBox="0 0 6 3"><path d="M0 0 H6 L3 3 Z" fill="#bbb"/></svg>
<div class="t" style="letter-spacing:0.00px;left:1274px;top:145px;font-size:11px;line-height:11px;color:#888;">編集</div>
<svg style="left:1342px;top:82px;" width="18" height="16" viewBox="0 0 18 16"><path d="M8 0.5 V15.5 H0.5 Z" fill="#aaa"/><path d="M10 0.5 V15.5 H17.5 Z" fill="#c3c3c3"/></svg>
<div class="t" style="letter-spacing:0.00px;left:1368px;top:85px;font-size:12px;line-height:12px;color:#aaa;">回転</div>
<svg style="left:1392px;top:90px;" width="6" height="3" viewBox="0 0 6 3"><path d="M0 0 H6 L3 3 Z" fill="#bbb"/></svg>
<svg style="left:1343px;top:115px;" width="14" height="17" viewBox="0 0 14 17"><rect x="0.9" y="7" width="12.2" height="9.1" rx="1" fill="none" stroke="#aaa" stroke-width="1.7"/><path d="M3 7 V4.5 A4 4 0 0 1 11 4.5 V7" fill="none" stroke="#aaa" stroke-width="1.7"/><circle cx="7" cy="11.5" r="0.9" fill="#aaa"/></svg>
<div class="t" style="transform:scaleX(0.694);transform-origin:0 0;left:1368px;top:119px;font-size:12px;line-height:12px;color:#aaa;">ロック</div>
<svg style="left:1397px;top:124px;" width="6" height="3" viewBox="0 0 6 3"><path d="M0 0 H6 L3 3 Z" fill="#bbb"/></svg>
<svg style="left:1464px;top:83px;" width="17" height="16" viewBox="0 0 17 16"><rect x="1" y="1" width="6" height="6" fill="none" stroke="#aaa" stroke-width="1.6"/><circle cx="11.5" cy="11" r="3.6" fill="none" stroke="#aaa" stroke-width="1.6"/><path d="M10 1.5 A4 4 0 0 1 14 5 M12.5 4.5 L14 6 L15.5 4.5 M6 14 A4 4 0 0 1 2.5 10.5 M1.2 11.8 L2.5 10.2 L4 11.8" fill="none" stroke="#aaa" stroke-width="1.2"/></svg>
<div class="t" style="transform:scaleX(0.950);transform-origin:0 0;left:1444px;top:110px;font-size:12px;line-height:12px;color:#aaa;">図形の置換</div>
<svg style="left:1470px;top:124px;" width="6" height="3" viewBox="0 0 6 3"><path d="M0 0 H6 L3 3 Z" fill="#bbb"/></svg>
<div class="t" style="letter-spacing:0.00px;left:1462px;top:145px;font-size:11px;line-height:11px;color:#888;">置換</div>
<svg style="left:281px;top:168px;" width="1598" height="17" viewBox="0 0 1598 17"><rect x="0" y="0" width="17" height="17" fill="#fcfcfd"/><rect x="20.2" y="12" width="1" height="5" fill="#d6d6dc"/><rect x="28.5" y="0" width="1" height="17" fill="#e3e3e8"/><rect x="36.8" y="12" width="1" height="5" fill="#d6d6dc"/><rect x="45.1" y="12" width="1" height="5" fill="#d6d6dc"/><rect x="53.4" y="12" width="1" height="5" fill="#d6d6dc"/><rect x="61.7" y="12" width="1" height="5" fill="#d6d6dc"/><rect x="70.1" y="0" width="1" height="17" fill="#e3e3e8"/><rect x="78.4" y="12" width="1" height="5" fill="#d6d6dc"/><rect x="86.7" y="12" width="1" height="5" fill="#d6d6dc"/><rect x="95.0" y="12" width="1" height="5" fill="#d6d6dc"/><rect x="103.3" y="12" width="1" height="5" fill="#d6d6dc"/><rect x="111.6" y="0" width="1" height="17" fill="#e3e3e8"/><rect x="119.9" y="12" width="1" height="5" fill="#d6d6dc"/><rect x="128.2" y="12" width="1" height="5" fill="#d6d6dc"/><rect x="136.5" y="12" width="1" height="5" fill="#d6d6dc"/><rect x="144.8" y="12" width="1" height="5" fill="#d6d6dc"/><rect x="153.1" y="0" width="1" height="17" fill="#e3e3e8"/><rect x="161.5" y="12" width="1" height="5" fill="#d6d6dc"/><rect x="169.8" y="12" width="1" height="5" fill="#d6d6dc"/><rect x="178.1" y="12" width="1" height="5" fill="#d6d6dc"/><rect x="186.4" y="12" width="1" height="5" fill="#d6d6dc"/><rect x="194.7" y="0" width="1" height="17" fill="#e3e3e8"/><rect x="203.0" y="12" width="1" height="5" fill="#d6d6dc"/><rect x="211.3" y="12" width="1" height="5" fill="#d6d6dc"/><rect x="219.6" y="12" width="1" height="5" fill="#d6d6dc"/><rect x="227.9" y="12" width="1" height="5" fill="#d6d6dc"/><rect x="236.2" y="0" width="1" height="17" fill="#e3e3e8"/><rect x="244.6" y="12" width="1" height="5" fill="#d6d6dc"/><rect x="252.9" y="12" width="1" height="5" fill="#d6d6dc"/><rect x="261.2" y="12" width="1" height="5" fill="#d6d6dc"/><rect x="269.5" y="12" width="1" height="5" fill="#d6d6dc"/><rect x="277.8" y="0" width="1" height="17" fill="#e3e3e8"/><rect x="286.1" y="12" width="1" height="5" fill="#d6d6dc"/><rect x="294.4" y="12" width="1" height="5" fill="#d6d6dc"/><rect x="302.7" y="12" width="1" height="5" fill="#d6d6dc"/><rect x="311.0" y="12" width="1" height="5" fill="#d6d6dc"/><rect x="319.3" y="0" width="1" height="17" fill="#e3e3e8"/><rect x="327.7" y="12" width="1" height="5" fill="#d6d6dc"/><rect x="336.0" y="12" width="1" height="5" fill="#d6d6dc"/><rect x="344.3" y="12" width="1" height="5" fill="#d6d6dc"/><rect x="352.6" y="12" width="1" height="5" fill="#d6d6dc"/><rect x="360.9" y="0" width="1" height="17" fill="#e3e3e8"/><rect x="369.2" y="12" width="1" height="5" fill="#d6d6dc"/><rect x="377.5" y="12" width="1" height="5" fill="#d6d6dc"/><rect x="385.8" y="12" width="1" height="5" fill="#d6d6dc"/><rect x="394.1" y="12" width="1" height="5" fill="#d6d6dc"/><rect x="402.5" y="0" width="1" height="17" fill="#e3e3e8"/><rect x="410.8" y="12" width="1" height="5" fill="#d6d6dc"/><rect x="419.1" y="12" width="1" height="5" fill="#d6d6dc"/><rect x="427.4" y="12" width="1" height="5" fill="#d6d6dc"/><rect x="435.7" y="12" width="1" height="5" fill="#d6d6dc"/><rect x="444.0" y="0" width="1" height="17" fill="#e3e3e8"/><rect x="452.3" y="12" width="1" height="5" fill="#d6d6dc"/><rect x="460.6" y="12" width="1" height="5" fill="#d6d6dc"/><rect x="468.9" y="12" width="1" height="5" fill="#d6d6dc"/><rect x="477.2" y="12" width="1" height="5" fill="#d6d6dc"/><rect x="485.5" y="0" width="1" height="17" fill="#e3e3e8"/><rect x="493.9" y="12" width="1" height="5" fill="#d6d6dc"/><rect x="502.2" y="12" width="1" height="5" fill="#d6d6dc"/><rect x="510.5" y="12" width="1" height="5" fill="#d6d6dc"/><rect x="518.8" y="12" width="1" height="5" fill="#d6d6dc"/><rect x="527.1" y="0" width="1" height="17" fill="#e3e3e8"/><rect x="535.4" y="12" width="1" height="5" fill="#d6d6dc"/><rect x="543.7" y="12" width="1" height="5" fill="#d6d6dc"/><rect x="552.0" y="12" width="1" height="5" fill="#d6d6dc"/><rect x="560.3" y="12" width="1" height="5" fill="#d6d6dc"/><rect x="568.6" y="0" width="1" height="17" fill="#e3e3e8"/><rect x="577.0" y="12" width="1" height="5" fill="#d6d6dc"/><rect x="585.3" y="12" width="1" height="5" fill="#d6d6dc"/><rect x="593.6" y="12" width="1" height="5" fill="#d6d6dc"/><rect x="601.9" y="12" width="1" height="5" fill="#d6d6dc"/><rect x="610.2" y="0" width="1" height="17" fill="#e3e3e8"/><rect x="618.5" y="12" width="1" height="5" fill="#d6d6dc"/><rect x="626.8" y="12" width="1" height="5" fill="#d6d6dc"/><rect x="635.1" y="12" width="1" height="5" fill="#d6d6dc"/><rect x="643.4" y="12" width="1" height="5" fill="#d6d6dc"/><rect x="651.8" y="0" width="1" height="17" fill="#e3e3e8"/><rect x="660.1" y="12" width="1" height="5" fill="#d6d6dc"/><rect x="668.4" y="12" width="1" height="5" fill="#d6d6dc"/><rect x="676.7" y="12" width="1" height="5" fill="#d6d6dc"/><rect x="685.0" y="12" width="1" height="5" fill="#d6d6dc"/><rect x="693.3" y="0" width="1" height="17" fill="#e3e3e8"/><rect x="701.6" y="12" width="1" height="5" fill="#d6d6dc"/><rect x="709.9" y="12" width="1" height="5" fill="#d6d6dc"/><rect x="718.2" y="12" width="1" height="5" fill="#d6d6dc"/><rect x="726.5" y="12" width="1" height="5" fill="#d6d6dc"/><rect x="734.8" y="0" width="1" height="17" fill="#e3e3e8"/><rect x="743.2" y="12" width="1" height="5" fill="#d6d6dc"/><rect x="751.5" y="12" width="1" height="5" fill="#d6d6dc"/><rect x="759.8" y="12" width="1" height="5" fill="#d6d6dc"/><rect x="768.1" y="12" width="1" height="5" fill="#d6d6dc"/><rect x="776.4" y="0" width="1" height="17" fill="#e3e3e8"/><rect x="784.7" y="12" width="1" height="5" fill="#d6d6dc"/><rect x="793.0" y="12" width="1" height="5" fill="#d6d6dc"/><rect x="801.3" y="12" width="1" height="5" fill="#d6d6dc"/><rect x="809.6" y="12" width="1" height="5" fill="#d6d6dc"/><rect x="817.9" y="0" width="1" height="17" fill="#e3e3e8"/><rect x="826.3" y="12" width="1" height="5" fill="#d6d6dc"/><rect x="834.6" y="12" width="1" height="5" fill="#d6d6dc"/><rect x="842.9" y="12" width="1" height="5" fill="#d6d6dc"/><rect x="851.2" y="12" width="1" height="5" fill="#d6d6dc"/><rect x="859.5" y="0" width="1" height="17" fill="#e3e3e8"/><rect x="867.8" y="12" width="1" height="5" fill="#d6d6dc"/><rect x="876.1" y="12" width="1" height="5" fill="#d6d6dc"/><rect x="884.4" y="12" width="1" height="5" fill="#d6d6dc"/><rect x="892.7" y="12" width="1" height="5" fill="#d6d6dc"/><rect x="901.0" y="0" width="1" height="17" fill="#e3e3e8"/><rect x="909.4" y="12" width="1" height="5" fill="#d6d6dc"/><rect x="917.7" y="12" width="1" height="5" fill="#d6d6dc"/><rect x="926.0" y="12" width="1" height="5" fill="#d6d6dc"/><rect x="934.3" y="12" width="1" height="5" fill="#d6d6dc"/><rect x="942.6" y="0" width="1" height="17" fill="#e3e3e8"/><rect x="950.9" y="12" width="1" height="5" fill="#d6d6dc"/><rect x="959.2" y="12" width="1" height="5" fill="#d6d6dc"/><rect x="967.5" y="12" width="1" height="5" fill="#d6d6dc"/><rect x="975.8" y="12" width="1" height="5" fill="#d6d6dc"/><rect x="984.2" y="0" width="1" height="17" fill="#e3e3e8"/><rect x="992.5" y="12" width="1" height="5" fill="#d6d6dc"/><rect x="1000.8" y="12" width="1" height="5" fill="#d6d6dc"/><rect x="1009.1" y="12" width="1" height="5" fill="#d6d6dc"/><rect x="1017.4" y="12" width="1" height="5" fill="#d6d6dc"/><rect x="1025.7" y="0" width="1" height="17" fill="#e3e3e8"/><rect x="1034.0" y="12" width="1" height="5" fill="#d6d6dc"/><rect x="1042.3" y="12" width="1" height="5" fill="#d6d6dc"/><rect x="1050.6" y="12" width="1" height="5" fill="#d6d6dc"/><rect x="1058.9" y="12" width="1" height="5" fill="#d6d6dc"/><rect x="1067.2" y="0" width="1" height="17" fill="#e3e3e8"/><rect x="1075.6" y="12" width="1" height="5" fill="#d6d6dc"/><rect x="1083.9" y="12" width="1" height="5" fill="#d6d6dc"/><rect x="1092.2" y="12" width="1" height="5" fill="#d6d6dc"/><rect x="1100.5" y="12" width="1" height="5" fill="#d6d6dc"/><rect x="1108.8" y="0" width="1" height="17" fill="#e3e3e8"/><rect x="1117.1" y="12" width="1" height="5" fill="#d6d6dc"/><rect x="1125.4" y="12" width="1" height="5" fill="#d6d6dc"/><rect x="1133.7" y="12" width="1" height="5" fill="#d6d6dc"/><rect x="1142.0" y="12" width="1" height="5" fill="#d6d6dc"/><rect x="1150.3" y="0" width="1" height="17" fill="#e3e3e8"/><rect x="1158.7" y="12" width="1" height="5" fill="#d6d6dc"/><rect x="1167.0" y="12" width="1" height="5" fill="#d6d6dc"/><rect x="1175.3" y="12" width="1" height="5" fill="#d6d6dc"/><rect x="1183.6" y="12" width="1" height="5" fill="#d6d6dc"/><rect x="1191.9" y="0" width="1" height="17" fill="#e3e3e8"/><rect x="1200.2" y="12" width="1" height="5" fill="#d6d6dc"/><rect x="1208.5" y="12" width="1" height="5" fill="#d6d6dc"/><rect x="1216.8" y="12" width="1" height="5" fill="#d6d6dc"/><rect x="1225.1" y="12" width="1" height="5" fill="#d6d6dc"/><rect x="1233.4" y="0" width="1" height="17" fill="#e3e3e8"/><rect x="1241.8" y="12" width="1" height="5" fill="#d6d6dc"/><rect x="1250.1" y="12" width="1" height="5" fill="#d6d6dc"/><rect x="1258.4" y="12" width="1" height="5" fill="#d6d6dc"/><rect x="1266.7" y="12" width="1" height="5" fill="#d6d6dc"/><rect x="1275.0" y="0" width="1" height="17" fill="#e3e3e8"/><rect x="1283.3" y="12" width="1" height="5" fill="#d6d6dc"/><rect x="1291.6" y="12" width="1" height="5" fill="#d6d6dc"/><rect x="1299.9" y="12" width="1" height="5" fill="#d6d6dc"/><rect x="1308.2" y="12" width="1" height="5" fill="#d6d6dc"/><rect x="1316.5" y="0" width="1" height="17" fill="#e3e3e8"/><rect x="1324.9" y="12" width="1" height="5" fill="#d6d6dc"/><rect x="1333.2" y="12" width="1" height="5" fill="#d6d6dc"/><rect x="1341.5" y="12" width="1" height="5" fill="#d6d6dc"/><rect x="1349.8" y="12" width="1" height="5" fill="#d6d6dc"/><rect x="1358.1" y="0" width="1" height="17" fill="#e3e3e8"/><rect x="1366.4" y="12" width="1" height="5" fill="#d6d6dc"/><rect x="1374.7" y="12" width="1" height="5" fill="#d6d6dc"/><rect x="1383.0" y="12" width="1" height="5" fill="#d6d6dc"/><rect x="1391.3" y="12" width="1" height="5" fill="#d6d6dc"/><rect x="1399.6" y="0" width="1" height="17" fill="#e3e3e8"/><rect x="1408.0" y="12" width="1" height="5" fill="#d6d6dc"/><rect x="1416.3" y="12" width="1" height="5" fill="#d6d6dc"/><rect x="1424.6" y="12" width="1" height="5" fill="#d6d6dc"/><rect x="1432.9" y="12" width="1" height="5" fill="#d6d6dc"/><rect x="1441.2" y="0" width="1" height="17" fill="#e3e3e8"/><rect x="1449.5" y="12" width="1" height="5" fill="#d6d6dc"/><rect x="1457.8" y="12" width="1" height="5" fill="#d6d6dc"/><rect x="1466.1" y="12" width="1" height="5" fill="#d6d6dc"/><rect x="1474.4" y="12" width="1" height="5" fill="#d6d6dc"/><rect x="1482.8" y="0" width="1" height="17" fill="#e3e3e8"/><rect x="1491.1" y="12" width="1" height="5" fill="#d6d6dc"/><rect x="1499.4" y="12" width="1" height="5" fill="#d6d6dc"/><rect x="1507.7" y="12" width="1" height="5" fill="#d6d6dc"/><rect x="1516.0" y="12" width="1" height="5" fill="#d6d6dc"/><rect x="1524.3" y="0" width="1" height="17" fill="#e3e3e8"/><rect x="1532.6" y="12" width="1" height="5" fill="#d6d6dc"/><rect x="1540.9" y="12" width="1" height="5" fill="#d6d6dc"/><rect x="1549.2" y="12" width="1" height="5" fill="#d6d6dc"/><rect x="1557.5" y="12" width="1" height="5" fill="#d6d6dc"/><rect x="1565.8" y="0" width="1" height="17" fill="#e3e3e8"/><rect x="1574.2" y="12" width="1" height="5" fill="#d6d6dc"/><rect x="1582.5" y="12" width="1" height="5" fill="#d6d6dc"/><rect x="1590.8" y="12" width="1" height="5" fill="#d6d6dc"/></svg>
<div class="a" style="left:298px;top:168px;width:1px;height:17px;background:#e3e3e8;"></div>
<div class="t" style="left:312px;top:170px;font-size:10px;line-height:10px;color:#999;letter-spacing:-0.3px;-webkit-text-stroke:0;">-50</div>
<div class="t" style="left:353px;top:170px;font-size:10px;line-height:10px;color:#999;letter-spacing:-0.3px;-webkit-text-stroke:0;">-40</div>
<div class="t" style="left:395px;top:170px;font-size:10px;line-height:10px;color:#999;letter-spacing:-0.3px;-webkit-text-stroke:0;">-30</div>
<div class="t" style="left:436px;top:170px;font-size:10px;line-height:10px;color:#999;letter-spacing:-0.3px;-webkit-text-stroke:0;">-20</div>
<div class="t" style="left:478px;top:170px;font-size:10px;line-height:10px;color:#999;letter-spacing:-0.3px;-webkit-text-stroke:0;">-10</div>
<div class="t" style="left:519px;top:170px;font-size:10px;line-height:10px;color:#999;letter-spacing:-0.3px;-webkit-text-stroke:0;">0</div>
<div class="t" style="left:561px;top:170px;font-size:10px;line-height:10px;color:#999;letter-spacing:-0.3px;-webkit-text-stroke:0;">10</div>
<div class="t" style="left:602px;top:170px;font-size:10px;line-height:10px;color:#999;letter-spacing:-0.3px;-webkit-text-stroke:0;">20</div>
<div class="t" style="left:644px;top:170px;font-size:10px;line-height:10px;color:#999;letter-spacing:-0.3px;-webkit-text-stroke:0;">30</div>
<div class="t" style="left:685px;top:170px;font-size:10px;line-height:10px;color:#999;letter-spacing:-0.3px;-webkit-text-stroke:0;">40</div>
<div class="t" style="left:727px;top:170px;font-size:10px;line-height:10px;color:#999;letter-spacing:-0.3px;-webkit-text-stroke:0;">50</div>
<div class="t" style="left:769px;top:170px;font-size:10px;line-height:10px;color:#999;letter-spacing:-0.3px;-webkit-text-stroke:0;">60</div>
<div class="t" style="left:810px;top:170px;font-size:10px;line-height:10px;color:#999;letter-spacing:-0.3px;-webkit-text-stroke:0;">70</div>
<div class="t" style="left:852px;top:170px;font-size:10px;line-height:10px;color:#999;letter-spacing:-0.3px;-webkit-text-stroke:0;">80</div>
<div class="t" style="left:893px;top:170px;font-size:10px;line-height:10px;color:#999;letter-spacing:-0.3px;-webkit-text-stroke:0;">90</div>
<div class="t" style="left:935px;top:170px;font-size:10px;line-height:10px;color:#999;letter-spacing:-0.3px;-webkit-text-stroke:0;">100</div>
<div class="t" style="left:976px;top:170px;font-size:10px;line-height:10px;color:#999;letter-spacing:-0.3px;-webkit-text-stroke:0;">110</div>
<div class="t" style="left:1018px;top:170px;font-size:10px;line-height:10px;color:#999;letter-spacing:-0.3px;-webkit-text-stroke:0;">120</div>
<div class="t" style="left:1059px;top:170px;font-size:10px;line-height:10px;color:#999;letter-spacing:-0.3px;-webkit-text-stroke:0;">130</div>
<div class="t" style="left:1101px;top:170px;font-size:10px;line-height:10px;color:#999;letter-spacing:-0.3px;-webkit-text-stroke:0;">140</div>
<div class="t" style="left:1142px;top:170px;font-size:10px;line-height:10px;color:#999;letter-spacing:-0.3px;-webkit-text-stroke:0;">150</div>
<div class="t" style="left:1184px;top:170px;font-size:10px;line-height:10px;color:#999;letter-spacing:-0.3px;-webkit-text-stroke:0;">160</div>
<div class="t" style="left:1226px;top:170px;font-size:10px;line-height:10px;color:#999;letter-spacing:-0.3px;-webkit-text-stroke:0;">170</div>
<div class="t" style="left:1267px;top:170px;font-size:10px;line-height:10px;color:#999;letter-spacing:-0.3px;-webkit-text-stroke:0;">180</div>
<div class="t" style="left:1309px;top:170px;font-size:10px;line-height:10px;color:#999;letter-spacing:-0.3px;-webkit-text-stroke:0;">190</div>
<div class="t" style="left:1350px;top:170px;font-size:10px;line-height:10px;color:#999;letter-spacing:-0.3px;-webkit-text-stroke:0;">200</div>
<div class="t" style="left:1392px;top:170px;font-size:10px;line-height:10px;color:#999;letter-spacing:-0.3px;-webkit-text-stroke:0;">210</div>
<div class="t" style="left:1433px;top:170px;font-size:10px;line-height:10px;color:#999;letter-spacing:-0.3px;-webkit-text-stroke:0;">220</div>
<div class="t" style="left:1475px;top:170px;font-size:10px;line-height:10px;color:#999;letter-spacing:-0.3px;-webkit-text-stroke:0;">230</div>
<div class="t" style="left:1516px;top:170px;font-size:10px;line-height:10px;color:#999;letter-spacing:-0.3px;-webkit-text-stroke:0;">240</div>
<div class="t" style="left:1558px;top:170px;font-size:10px;line-height:10px;color:#999;letter-spacing:-0.3px;-webkit-text-stroke:0;">250</div>
<div class="t" style="left:1600px;top:170px;font-size:10px;line-height:10px;color:#999;letter-spacing:-0.3px;-webkit-text-stroke:0;">260</div>
<div class="t" style="left:1641px;top:170px;font-size:10px;line-height:10px;color:#999;letter-spacing:-0.3px;-webkit-text-stroke:0;">270</div>
<div class="t" style="left:1683px;top:170px;font-size:10px;line-height:10px;color:#999;letter-spacing:-0.3px;-webkit-text-stroke:0;">280</div>
<div class="t" style="left:1724px;top:170px;font-size:10px;line-height:10px;color:#999;letter-spacing:-0.3px;-webkit-text-stroke:0;">290</div>
<div class="t" style="left:1766px;top:170px;font-size:10px;line-height:10px;color:#999;letter-spacing:-0.3px;-webkit-text-stroke:0;">300</div>
<div class="t" style="left:1807px;top:170px;font-size:10px;line-height:10px;color:#999;letter-spacing:-0.3px;-webkit-text-stroke:0;">310</div>
<div class="t" style="left:1849px;top:170px;font-size:10px;line-height:10px;color:#999;letter-spacing:-0.3px;-webkit-text-stroke:0;">320</div>
<svg style="left:281px;top:186px;" width="17" height="783" viewBox="0 0 17 783"><rect x="12" y="5.5" width="5" height="1" fill="#d6d6dc"/><rect x="12" y="13.8" width="5" height="1" fill="#d6d6dc"/><rect x="0" y="22.1" width="17" height="1" fill="#e3e3e8"/><rect x="12" y="30.4" width="5" height="1" fill="#d6d6dc"/><rect x="12" y="38.7" width="5" height="1" fill="#d6d6dc"/><rect x="12" y="47.0" width="5" height="1" fill="#d6d6dc"/><rect x="12" y="55.3" width="5" height="1" fill="#d6d6dc"/><rect x="0" y="63.6" width="17" height="1" fill="#e3e3e8"/><rect x="12" y="72.0" width="5" height="1" fill="#d6d6dc"/><rect x="12" y="80.3" width="5" height="1" fill="#d6d6dc"/><rect x="12" y="88.6" width="5" height="1" fill="#d6d6dc"/><rect x="12" y="96.9" width="5" height="1" fill="#d6d6dc"/><rect x="0" y="105.2" width="17" height="1" fill="#e3e3e8"/><rect x="12" y="113.5" width="5" height="1" fill="#d6d6dc"/><rect x="12" y="121.8" width="5" height="1" fill="#d6d6dc"/><rect x="12" y="130.1" width="5" height="1" fill="#d6d6dc"/><rect x="12" y="138.4" width="5" height="1" fill="#d6d6dc"/><rect x="0" y="146.8" width="17" height="1" fill="#e3e3e8"/><rect x="12" y="155.1" width="5" height="1" fill="#d6d6dc"/><rect x="12" y="163.4" width="5" height="1" fill="#d6d6dc"/><rect x="12" y="171.7" width="5" height="1" fill="#d6d6dc"/><rect x="12" y="180.0" width="5" height="1" fill="#d6d6dc"/><rect x="0" y="188.3" width="17" height="1" fill="#e3e3e8"/><rect x="12" y="196.6" width="5" height="1" fill="#d6d6dc"/><rect x="12" y="204.9" width="5" height="1" fill="#d6d6dc"/><rect x="12" y="213.2" width="5" height="1" fill="#d6d6dc"/><rect x="12" y="221.5" width="5" height="1" fill="#d6d6dc"/><rect x="0" y="229.9" width="17" height="1" fill="#e3e3e8"/><rect x="12" y="238.2" width="5" height="1" fill="#d6d6dc"/><rect x="12" y="246.5" width="5" height="1" fill="#d6d6dc"/><rect x="12" y="254.8" width="5" height="1" fill="#d6d6dc"/><rect x="12" y="263.1" width="5" height="1" fill="#d6d6dc"/><rect x="0" y="271.4" width="17" height="1" fill="#e3e3e8"/><rect x="12" y="279.7" width="5" height="1" fill="#d6d6dc"/><rect x="12" y="288.0" width="5" height="1" fill="#d6d6dc"/><rect x="12" y="296.3" width="5" height="1" fill="#d6d6dc"/><rect x="12" y="304.6" width="5" height="1" fill="#d6d6dc"/><rect x="0" y="312.9" width="17" height="1" fill="#e3e3e8"/><rect x="12" y="321.3" width="5" height="1" fill="#d6d6dc"/><rect x="12" y="329.6" width="5" height="1" fill="#d6d6dc"/><rect x="12" y="337.9" width="5" height="1" fill="#d6d6dc"/><rect x="12" y="346.2" width="5" height="1" fill="#d6d6dc"/><rect x="0" y="354.5" width="17" height="1" fill="#e3e3e8"/><rect x="12" y="362.8" width="5" height="1" fill="#d6d6dc"/><rect x="12" y="371.1" width="5" height="1" fill="#d6d6dc"/><rect x="12" y="379.4" width="5" height="1" fill="#d6d6dc"/><rect x="12" y="387.7" width="5" height="1" fill="#d6d6dc"/><rect x="0" y="396.0" width="17" height="1" fill="#e3e3e8"/><rect x="12" y="404.4" width="5" height="1" fill="#d6d6dc"/><rect x="12" y="412.7" width="5" height="1" fill="#d6d6dc"/><rect x="12" y="421.0" width="5" height="1" fill="#d6d6dc"/><rect x="12" y="429.3" width="5" height="1" fill="#d6d6dc"/><rect x="0" y="437.6" width="17" height="1" fill="#e3e3e8"/><rect x="12" y="445.9" width="5" height="1" fill="#d6d6dc"/><rect x="12" y="454.2" width="5" height="1" fill="#d6d6dc"/><rect x="12" y="462.5" width="5" height="1" fill="#d6d6dc"/><rect x="12" y="470.8" width="5" height="1" fill="#d6d6dc"/><rect x="0" y="479.1" width="17" height="1" fill="#e3e3e8"/><rect x="12" y="487.5" width="5" height="1" fill="#d6d6dc"/><rect x="12" y="495.8" width="5" height="1" fill="#d6d6dc"/><rect x="12" y="504.1" width="5" height="1" fill="#d6d6dc"/><rect x="12" y="512.4" width="5" height="1" fill="#d6d6dc"/><rect x="0" y="520.7" width="17" height="1" fill="#e3e3e8"/><rect x="12" y="529.0" width="5" height="1" fill="#d6d6dc"/><rect x="12" y="537.3" width="5" height="1" fill="#d6d6dc"/><rect x="12" y="545.6" width="5" height="1" fill="#d6d6dc"/><rect x="12" y="553.9" width="5" height="1" fill="#d6d6dc"/><rect x="0" y="562.2" width="17" height="1" fill="#e3e3e8"/><rect x="12" y="570.6" width="5" height="1" fill="#d6d6dc"/><rect x="12" y="578.9" width="5" height="1" fill="#d6d6dc"/><rect x="12" y="587.2" width="5" height="1" fill="#d6d6dc"/><rect x="12" y="595.5" width="5" height="1" fill="#d6d6dc"/><rect x="0" y="603.8" width="17" height="1" fill="#e3e3e8"/><rect x="12" y="612.1" width="5" height="1" fill="#d6d6dc"/><rect x="12" y="620.4" width="5" height="1" fill="#d6d6dc"/><rect x="12" y="628.7" width="5" height="1" fill="#d6d6dc"/><rect x="12" y="637.0" width="5" height="1" fill="#d6d6dc"/><rect x="0" y="645.4" width="17" height="1" fill="#e3e3e8"/><rect x="12" y="653.7" width="5" height="1" fill="#d6d6dc"/><rect x="12" y="662.0" width="5" height="1" fill="#d6d6dc"/><rect x="12" y="670.3" width="5" height="1" fill="#d6d6dc"/><rect x="12" y="678.6" width="5" height="1" fill="#d6d6dc"/><rect x="0" y="686.9" width="17" height="1" fill="#e3e3e8"/><rect x="12" y="695.2" width="5" height="1" fill="#d6d6dc"/><rect x="12" y="703.5" width="5" height="1" fill="#d6d6dc"/><rect x="12" y="711.8" width="5" height="1" fill="#d6d6dc"/><rect x="12" y="720.1" width="5" height="1" fill="#d6d6dc"/><rect x="0" y="728.4" width="17" height="1" fill="#e3e3e8"/><rect x="12" y="736.8" width="5" height="1" fill="#d6d6dc"/><rect x="12" y="745.1" width="5" height="1" fill="#d6d6dc"/><rect x="12" y="753.4" width="5" height="1" fill="#d6d6dc"/><rect x="12" y="761.7" width="5" height="1" fill="#d6d6dc"/><rect x="0" y="770.0" width="17" height="1" fill="#e3e3e8"/><rect x="12" y="778.3" width="5" height="1" fill="#d6d6dc"/></svg>
<div class="a" style="left:0;top:186px;width:298px;height:783px;overflow:hidden">
<div class="t" style="left:283px;top:24px;width:9px;height:16px;overflow:visible;"><div style="position:absolute;left:0;top:16px;transform:rotate(-90deg);transform-origin:0 0;font-size:10px;line-height:9px;color:#9a9a9a;white-space:nowrap;letter-spacing:-0.3px">210</div></div>
<div class="t" style="left:283px;top:66px;width:9px;height:16px;overflow:visible;"><div style="position:absolute;left:0;top:16px;transform:rotate(-90deg);transform-origin:0 0;font-size:10px;line-height:9px;color:#9a9a9a;white-space:nowrap;letter-spacing:-0.3px">220</div></div>
<div class="t" style="left:283px;top:107px;width:9px;height:16px;overflow:visible;"><div style="position:absolute;left:0;top:16px;transform:rotate(-90deg);transform-origin:0 0;font-size:10px;line-height:9px;color:#9a9a9a;white-space:nowrap;letter-spacing:-0.3px">230</div></div>
<div class="t" style="left:283px;top:149px;width:9px;height:16px;overflow:visible;"><div style="position:absolute;left:0;top:16px;transform:rotate(-90deg);transform-origin:0 0;font-size:10px;line-height:9px;color:#9a9a9a;white-space:nowrap;letter-spacing:-0.3px">240</div></div>
<div class="t" style="left:283px;top:190px;width:9px;height:16px;overflow:visible;"><div style="position:absolute;left:0;top:16px;transform:rotate(-90deg);transform-origin:0 0;font-size:10px;line-height:9px;color:#9a9a9a;white-space:nowrap;letter-spacing:-0.3px">250</div></div>
<div class="t" style="left:283px;top:232px;width:9px;height:16px;overflow:visible;"><div style="position:absolute;left:0;top:16px;transform:rotate(-90deg);transform-origin:0 0;font-size:10px;line-height:9px;color:#9a9a9a;white-space:nowrap;letter-spacing:-0.3px">260</div></div>
<div class="t" style="left:283px;top:273px;width:9px;height:16px;overflow:visible;"><div style="position:absolute;left:0;top:16px;transform:rotate(-90deg);transform-origin:0 0;font-size:10px;line-height:9px;color:#9a9a9a;white-space:nowrap;letter-spacing:-0.3px">270</div></div>
<div class="t" style="left:283px;top:315px;width:9px;height:16px;overflow:visible;"><div style="position:absolute;left:0;top:16px;transform:rotate(-90deg);transform-origin:0 0;font-size:10px;line-height:9px;color:#9a9a9a;white-space:nowrap;letter-spacing:-0.3px">280</div></div>
<div class="t" style="left:283px;top:356px;width:9px;height:16px;overflow:visible;"><div style="position:absolute;left:0;top:16px;transform:rotate(-90deg);transform-origin:0 0;font-size:10px;line-height:9px;color:#9a9a9a;white-space:nowrap;letter-spacing:-0.3px">290</div></div>
<div class="t" style="left:283px;top:398px;width:9px;height:16px;overflow:visible;"><div style="position:absolute;left:0;top:16px;transform:rotate(-90deg);transform-origin:0 0;font-size:10px;line-height:9px;color:#9a9a9a;white-space:nowrap;letter-spacing:-0.3px">300</div></div>
<div class="t" style="left:283px;top:440px;width:9px;height:16px;overflow:visible;"><div style="position:absolute;left:0;top:16px;transform:rotate(-90deg);transform-origin:0 0;font-size:10px;line-height:9px;color:#9a9a9a;white-space:nowrap;letter-spacing:-0.3px">310</div></div>
<div class="t" style="left:283px;top:481px;width:9px;height:16px;overflow:visible;"><div style="position:absolute;left:0;top:16px;transform:rotate(-90deg);transform-origin:0 0;font-size:10px;line-height:9px;color:#9a9a9a;white-space:nowrap;letter-spacing:-0.3px">320</div></div>
<div class="t" style="left:283px;top:523px;width:9px;height:16px;overflow:visible;"><div style="position:absolute;left:0;top:16px;transform:rotate(-90deg);transform-origin:0 0;font-size:10px;line-height:9px;color:#9a9a9a;white-space:nowrap;letter-spacing:-0.3px">330</div></div>
<div class="t" style="left:283px;top:564px;width:9px;height:16px;overflow:visible;"><div style="position:absolute;left:0;top:16px;transform:rotate(-90deg);transform-origin:0 0;font-size:10px;line-height:9px;color:#9a9a9a;white-space:nowrap;letter-spacing:-0.3px">340</div></div>
<div class="t" style="left:283px;top:606px;width:9px;height:16px;overflow:visible;"><div style="position:absolute;left:0;top:16px;transform:rotate(-90deg);transform-origin:0 0;font-size:10px;line-height:9px;color:#9a9a9a;white-space:nowrap;letter-spacing:-0.3px">350</div></div>
<div class="t" style="left:283px;top:647px;width:9px;height:16px;overflow:visible;"><div style="position:absolute;left:0;top:16px;transform:rotate(-90deg);transform-origin:0 0;font-size:10px;line-height:9px;color:#9a9a9a;white-space:nowrap;letter-spacing:-0.3px">360</div></div>
<div class="t" style="left:283px;top:689px;width:9px;height:16px;overflow:visible;"><div style="position:absolute;left:0;top:16px;transform:rotate(-90deg);transform-origin:0 0;font-size:10px;line-height:9px;color:#9a9a9a;white-space:nowrap;letter-spacing:-0.3px">370</div></div>
<div class="t" style="left:283px;top:730px;width:9px;height:16px;overflow:visible;"><div style="position:absolute;left:0;top:16px;transform:rotate(-90deg);transform-origin:0 0;font-size:10px;line-height:9px;color:#9a9a9a;white-space:nowrap;letter-spacing:-0.3px">380</div></div>
<div class="t" style="left:283px;top:772px;width:9px;height:16px;overflow:visible;"><div style="position:absolute;left:0;top:16px;transform:rotate(-90deg);transform-origin:0 0;font-size:10px;line-height:9px;color:#9a9a9a;white-space:nowrap;letter-spacing:-0.3px">390</div></div>
</div>
<svg style="left:29px;top:181px;" width="14" height="13" viewBox="0 0 14 13"><path d="M7 1 L1.5 6.5 L7 12 M13 1 L7.5 6.5 L13 12" fill="none" stroke="#333" stroke-width="1.8"/></svg>
<svg style="left:27px;top:216px;" width="17" height="17" viewBox="0 0 17 17"><rect x="1" y="1" width="15" height="15" rx="1.5" fill="none" stroke="#333" stroke-width="1.8"/><path d="M8.5 1 L6.5 16 M7.5 8.5 H16" stroke="#333" stroke-width="1.6"/></svg>
<div class="t" style="transform:scaleX(0.717);transform-origin:0 0;left:14px;top:241px;font-size:10px;line-height:10px;color:#333;">テンプレート</div>
<div class="a" style="left:20px;top:268px;width:32px;height:32px;background:#e8f3ff;border-radius:6px;"></div>
<svg style="left:27px;top:276px;" width="17" height="17" viewBox="0 0 17 17"><rect x="1.2" y="6" width="9.5" height="9.8" rx="1.5" fill="none" stroke="#1677ff" stroke-width="2"/><path d="M6 6 V5.5 A4.6 4.6 0 1 1 10.7 10.5" fill="none" stroke="#1677ff" stroke-width="2"/></svg>
<div class="t" style="transform:scaleX(0.950);transform-origin:0 0;left:27px;top:301px;font-size:10px;line-height:10px;color:#1677ff;">図形</div>
<svg style="left:28px;top:336px;" width="16" height="16" viewBox="0 0 16 16"><rect x="1" y="1" width="14" height="14" rx="1.5" fill="none" stroke="#333" stroke-width="1.8"/><path d="M4.5 4.5 H11.5 M8 4.5 V11.5 M6.5 11.5 H9.5" stroke="#333" stroke-width="1.7"/></svg>
<div class="t" style="transform:scaleX(0.825);transform-origin:0 0;left:19px;top:361px;font-size:10px;line-height:10px;color:#333;">テキスト</div>
<svg style="left:28px;top:396px;" width="16" height="16" viewBox="0 0 16 16"><rect x="1" y="1" width="14" height="14" rx="1.5" fill="none" stroke="#333" stroke-width="1.8"/><path d="M1 7 L9.5 14.5" stroke="#333" stroke-width="1.7"/><circle cx="11" cy="5" r="1.4" fill="#333"/></svg>
<div class="t" style="transform:scaleX(0.950);transform-origin:0 0;left:27px;top:421px;font-size:10px;line-height:10px;color:#333;">画像</div>
<svg style="left:28px;top:456px;" width="16" height="16" viewBox="0 0 16 16"><rect x="1" y="1" width="14" height="14" rx="1.5" fill="none" stroke="#333" stroke-width="1.8"/><path d="M8 4.2 L11.6 6.8 L10.3 11 H5.7 L4.4 6.8 Z" fill="none" stroke="#333" stroke-width="1.5" stroke-linejoin="round"/></svg>
<div class="t" style="transform:scaleX(0.825);transform-origin:0 0;left:19px;top:481px;font-size:10px;line-height:10px;color:#333;">アイコン</div>
<svg style="left:28px;top:516px;" width="16" height="16" viewBox="0 0 16 16"><path d="M1 0 V15 H16" fill="none" stroke="#333" stroke-width="1.8"/><path d="M3.5 10.5 L7 6 L10 9 L15 4" fill="none" stroke="#333" stroke-width="1.6" stroke-linejoin="round"/></svg>
<div class="t" style="transform:scaleX(0.825);transform-origin:0 0;left:19px;top:541px;font-size:10px;line-height:10px;color:#333;">チャート</div>
<svg style="left:27px;top:576px;" width="18" height="17" viewBox="0 0 18 17"><path d="M6 2.5 A2 2 0 0 1 10 2.5 V4 H13 V7 A2.2 2.2 0 0 1 13 11.5 V15 H9 A2 2 0 0 0 5 15 H1.5 V11 A2 2 0 0 0 1.5 7 V4 H6 Z" fill="none" stroke="#333" stroke-width="1.7" stroke-linejoin="round"/></svg>
<div class="t" style="transform:scaleX(0.683);transform-origin:0 0;left:15px;top:601px;font-size:10px;line-height:10px;color:#333;">ウィジェット</div>
<div class="a" style="left:80px;top:184px;width:184px;height:32px;background:#fff;border:1px solid #e6e6ea;border-radius:6px;"></div>
<svg style="left:90px;top:194px;" width="12" height="12" viewBox="0 0 12 12"><circle cx="5" cy="5" r="4.1" fill="none" stroke="#888" stroke-width="1.5"/><path d="M8 8 L11.2 11.2" stroke="#888" stroke-width="1.6"/></svg>
<div class="t" style="transform:scaleX(0.792);transform-origin:0 0;left:110px;top:194px;font-size:12px;line-height:12px;color:#222;">ジェノグラム</div>
<svg style="left:243px;top:195px;" width="10" height="10" viewBox="0 0 10 10"><path d="M0.5 0.5 L9.5 9.5 M9.5 0.5 L0.5 9.5" stroke="#777" stroke-width="1.2"/></svg>
<svg style="left:81px;top:234px;" width="8" height="9" viewBox="0 0 8 9"><path d="M0.8 4 L4 0.8 L7.2 4 M0.8 8 L4 4.8 L7.2 8" fill="none" stroke="#555" stroke-width="1.1"/></svg>
<div class="t" style="transform:scaleX(0.802);transform-origin:0 0;left:92px;top:234px;font-size:12px;line-height:12px;color:#333;">すべて折りたたむ</div>
<svg style="left:221px;top:233px;" width="13" height="13" viewBox="0 0 13 13"><path d="M6.5 0.8 L8 2.2 L10.2 1.9 L10.7 4 L12.5 5.2 L11.6 6.5 L12.5 7.8 L10.7 9 L10.2 11.1 L8 10.8 L6.5 12.2 L5 10.8 L2.8 11.1 L2.3 9 L0.5 7.8 L1.4 6.5 L0.5 5.2 L2.3 4 L2.8 1.9 L5 2.2 Z" fill="none" stroke="#444" stroke-width="1.1" stroke-linejoin="round"/><circle cx="6.5" cy="6.5" r="2" fill="none" stroke="#444" stroke-width="1.1"/></svg>
<div class="t" style="letter-spacing:0.00px;left:240px;top:234px;font-size:12px;line-height:12px;color:#333;">管理</div>
<div class="a" style="left:64px;top:260px;width:216px;height:1px;background:#ececf0;"></div>
<div class="a" style="left:272px;top:262px;width:6px;height:278px;background:#dcdcdf;border-radius:3px;"></div>
<svg style="left:81px;top:279px;" width="7" height="4" viewBox="0 0 7 4"><path d="M0 0 H7 L3.5 4 Z" fill="#666"/></svg>
<div class="t" style="transform:scaleX(0.722);transform-origin:0 0;left:92px;top:274px;font-size:12px;line-height:12px;color:#1677ff;">ジェノグラム</div>
<div class="t" style="left:149px;top:274px;font-size:12px;line-height:12px;color:#555;-webkit-text-stroke:0;">(</div>
<div class="t" style="transform:scaleX(0.939);transform-origin:0 0;left:156px;top:275px;font-size:11px;line-height:11px;color:#444;">家系図</div>
<div class="t" style="left:190px;top:274px;font-size:12px;line-height:12px;color:#555;-webkit-text-stroke:0;">)</div>
<svg style="left:250px;top:274px;" width="12" height="13" viewBox="0 0 12 13"><rect x="0.6" y="0.6" width="10.8" height="9.8" rx="1.2" fill="none" stroke="#333" stroke-width="1.1"/><circle cx="6" cy="4.2" r="1.8" fill="none" stroke="#333" stroke-width="1"/><path d="M2.8 9.6 A3.2 3 0 0 1 9.2 9.6" fill="none" stroke="#333" stroke-width="1"/><path d="M2 12.3 H10" stroke="#333" stroke-width="1"/></svg>
<div class="a" style="left:80px;top:301px;width:40px;height:40px;background:#f5f6fa;border-radius:6px;"></div>
<svg style="left:80px;top:301px;" width="40" height="40" viewBox="0 0 40 40"><rect x="5" y="5" width="30" height="29.6" fill="#d2d2d2" stroke="#333" stroke-width="1.3"/><circle cx="20" cy="16.5" r="6.3" fill="#888"/><path d="M8 34 A12 9.5 0 0 1 32 34 Z" fill="#888"/></svg>
<div class="a" style="left:128px;top:301px;width:40px;height:40px;background:#f5f6fa;border-radius:6px;"></div>
<svg style="left:128px;top:301px;" width="40" height="40" viewBox="0 0 40 40"><circle cx="20" cy="20" r="14.8" fill="#d2d2d2" stroke="#555" stroke-width="1"/><circle cx="20" cy="15" r="6" fill="#888"/><path d="M10.1 31 A9.9 9 0 0 1 29.9 31 Z" fill="#888"/></svg>
<div class="a" style="left:176px;top:301px;width:40px;height:40px;background:#f5f6fa;border-radius:6px;"></div>
<svg style="left:176px;top:301px;" width="40" height="40" viewBox="0 0 40 40"><rect x="6.4" y="4" width="28.3" height="33.3" fill="#d2d2d2" stroke="#444" stroke-width="1.2"/><circle cx="20.5" cy="13.8" r="6" fill="#888"/><path d="M8.5 32.7 A12 10.700000000000003 0 0 1 32.5 32.7 Z" fill="#888"/><rect x="6.4" y="32.7" width="28.3" height="4.6" fill="#555"/><rect x="13" y="34.5" width="15" height="0.8" fill="#999"/></svg>
<div class="a" style="left:224px;top:301px;width:40px;height:40px;background:#f5f6fa;border-radius:6px;"></div>
<svg style="left:224px;top:301px;" width="40" height="40" viewBox="0 0 40 40"><rect x="5.5" y="2.4" width="29.4" height="35.6" fill="#fff" stroke="#555" stroke-width="1"/><circle cx="20.2" cy="17" r="13" fill="#d2d2d2"/><circle cx="20.2" cy="11.5" r="6" fill="#888"/><path d="M8.7 31 A11.5 11 0 0 1 31.7 31 Z" fill="#888"/><rect x="5.5" y="33" width="29.4" height="5" fill="#555"/><rect x="13" y="35" width="15" height="0.8" fill="#aaa"/></svg>
<div class="a" style="left:80px;top:349px;width:40px;height:40px;background:#f5f6fa;border-radius:6px;"></div>
<svg style="left:80px;top:349px;" width="40" height="40" viewBox="0 0 40 40"><rect x="7.1" y="4.9" width="26.9" height="28" fill="#d2d2d2"/><circle cx="20.5" cy="13.5" r="6.3" fill="#888"/><path d="M8.5 32 A12 10 0 0 1 32.5 32 Z" fill="#888"/><rect x="7.1" y="32" width="26.9" height="4.8" fill="#555"/><rect x="13" y="34" width="15" height="0.8" fill="#999"/></svg>
<div class="a" style="left:128px;top:349px;width:40px;height:40px;background:#f5f6fa;border-radius:6px;"></div>
<svg style="left:128px;top:349px;" width="40" height="40" viewBox="0 0 40 40"><rect x="7" y="4" width="27" height="29" fill="#fff"/><circle cx="20.5" cy="17" r="12.5" fill="#d2d2d2"/><circle cx="20.5" cy="12" r="6" fill="#888"/><path d="M9.0 32 A11.5 11 0 0 1 32.0 32 Z" fill="#888"/><rect x="7" y="32" width="27" height="4.8" fill="#555"/><rect x="13" y="34" width="15" height="0.8" fill="#999"/></svg>
<div class="a" style="left:176px;top:349px;width:40px;height:40px;background:#f5f6fa;border-radius:6px;"></div>
<svg style="left:176px;top:349px;" width="40" height="40" viewBox="0 0 40 40"><rect x="3.5" y="14" width="33.0" height="13.5" rx="0" fill="#fff" stroke="#555" stroke-width="1.2"/><rect x="4.3" y="14.8" width="12" height="11.9" fill="#d2d2d2"/><circle cx="10.0" cy="18.25" r="3.2" fill="#888"/><path d="M4.0 26.9 A6 4.649999999999999 0 0 1 16.0 26.9 Z" fill="#888"/><rect x="18.5" y="16.5" width="4" height="0.8" fill="#777"/><rect x="18.5" y="19" width="6" height="0.8" fill="#777"/><rect x="18.5" y="21.5" width="4" height="0.8" fill="#777"/><rect x="18.5" y="25.5" width="8" height="0.8" fill="#777"/></svg>
<div class="a" style="left:224px;top:349px;width:40px;height:40px;background:#f5f6fa;border-radius:6px;"></div>
<svg style="left:224px;top:349px;" width="40" height="40" viewBox="0 0 40 40"><rect x="4" y="14.5" width="33" height="13.5" rx="2.5" fill="#fff" stroke="#555" stroke-width="1.2"/><rect x="4.8" y="15.3" width="12" height="11.9" fill="#d2d2d2"/><circle cx="10.5" cy="18.75" r="3.2" fill="#888"/><path d="M4.5 27.4 A6 4.649999999999999 0 0 1 16.5 27.4 Z" fill="#888"/><rect x="19" y="17.0" width="4" height="0.8" fill="#777"/><rect x="19" y="19.5" width="6" height="0.8" fill="#777"/><rect x="19" y="22.0" width="4" height="0.8" fill="#777"/><rect x="19" y="26.0" width="8" height="0.8" fill="#777"/></svg>
<div class="a" style="left:80px;top:397px;width:40px;height:40px;background:#f5f6fa;border-radius:6px;"></div>
<svg style="left:80px;top:397px;" width="40" height="40" viewBox="0 0 40 40"><rect x="3" y="13" width="34" height="15" rx="0" fill="#fff" stroke="#555" stroke-width="1.2"/><circle cx="9.5" cy="20.5" r="6" fill="#d2d2d2"/><circle cx="9.5" cy="18.0" r="3.2" fill="#888"/><path d="M3.5 27.4 A6 5.399999999999999 0 0 1 15.5 27.4 Z" fill="#888"/><rect x="18" y="15.5" width="4" height="0.8" fill="#777"/><rect x="18" y="18" width="6" height="0.8" fill="#777"/><rect x="18" y="20.5" width="4" height="0.8" fill="#777"/><rect x="18" y="24.5" width="8" height="0.8" fill="#777"/></svg>
<div class="a" style="left:128px;top:397px;width:40px;height:40px;background:#f5f6fa;border-radius:6px;"></div>
<svg style="left:128px;top:397px;" width="40" height="40" viewBox="0 0 40 40"><rect x="3.5" y="12" width="33.0" height="16" rx="3" fill="#fff" stroke="#555" stroke-width="1.2"/><circle cx="10.0" cy="20.0" r="6" fill="#d2d2d2"/><circle cx="10.0" cy="17.5" r="3.2" fill="#888"/><path d="M4.0 27.4 A6 5.899999999999999 0 0 1 16.0 27.4 Z" fill="#888"/><rect x="18.5" y="14.5" width="4" height="0.8" fill="#777"/><rect x="18.5" y="17" width="6" height="0.8" fill="#777"/><rect x="18.5" y="19.5" width="4" height="0.8" fill="#777"/><rect x="18.5" y="23.5" width="8" height="0.8" fill="#777"/></svg>
<div class="a" style="left:176px;top:397px;width:40px;height:40px;background:#f5f6fa;border-radius:6px;"></div>
<svg style="left:176px;top:397px;" width="40" height="40" viewBox="0 0 40 40"><rect x="3" y="11.5" width="34" height="17.5" rx="0" fill="#fff5ea" stroke="#c0392b" stroke-width="1.2"/><rect x="3" y="11.5" width="34" height="3" fill="#fff"/><rect x="3.8" y="15.3" width="12" height="12.9" fill="#d2d2d2"/><circle cx="9.5" cy="19.25" r="3.2" fill="#888"/><path d="M3.5 28.4 A6 5.149999999999999 0 0 1 15.5 28.4 Z" fill="#888"/><rect x="18" y="17.0" width="4" height="0.8" fill="#777"/><rect x="18" y="19.5" width="6" height="0.8" fill="#777"/><rect x="18" y="22.0" width="4" height="0.8" fill="#777"/><rect x="18" y="26.0" width="8" height="0.8" fill="#777"/><path d="M3 14.5 H37" stroke="#c0392b" stroke-width="1"/></svg>
<div class="a" style="left:224px;top:397px;width:40px;height:40px;background:#f5f6fa;border-radius:6px;"></div>
<svg style="left:224px;top:397px;" width="40" height="40" viewBox="0 0 40 40"><rect x="3" y="11.5" width="34" height="17.5" rx="0" fill="#fff5ea" stroke="#c0392b" stroke-width="1.2"/><rect x="3" y="11.5" width="34" height="3" fill="#fff"/><circle cx="9.5" cy="21.75" r="6" fill="#d2d2d2"/><circle cx="9.5" cy="19.25" r="3.2" fill="#888"/><path d="M3.5 28.4 A6 5.149999999999999 0 0 1 15.5 28.4 Z" fill="#888"/><rect x="18" y="17.0" width="4" height="0.8" fill="#777"/><rect x="18" y="19.5" width="6" height="0.8" fill="#777"/><rect x="18" y="22.0" width="4" height="0.8" fill="#777"/><rect x="18" y="26.0" width="8" height="0.8" fill="#777"/><path d="M3 14.5 H37" stroke="#c0392b" stroke-width="1"/></svg>
<div class="a" style="left:80px;top:445px;width:40px;height:40px;background:#f5f6fa;border-radius:6px;"></div>
<svg style="left:80px;top:445px;" width="40" height="40" viewBox="0 0 40 40"><rect x="3.5" y="11.5" width="33.5" height="18.0" rx="0" fill="#fff" stroke="#444" stroke-width="1.2"/><rect x="3.5" y="11.5" width="33.5" height="3" fill="#3a6fd0"/><rect x="4.3" y="15.3" width="12" height="13.4" fill="#d2d2d2"/><circle cx="10.0" cy="19.5" r="3.2" fill="#888"/><path d="M4.0 28.9 A6 5.399999999999999 0 0 1 16.0 28.9 Z" fill="#888"/><rect x="18.5" y="17.0" width="4" height="0.8" fill="#777"/><rect x="18.5" y="19.5" width="6" height="0.8" fill="#777"/><rect x="18.5" y="22.0" width="4" height="0.8" fill="#777"/><rect x="18.5" y="26.0" width="8" height="0.8" fill="#777"/></svg>
<div class="a" style="left:128px;top:445px;width:40px;height:40px;background:#f5f6fa;border-radius:6px;"></div>
<svg style="left:128px;top:445px;" width="40" height="40" viewBox="0 0 40 40"><rect x="3.5" y="11.5" width="33.5" height="18.0" rx="0" fill="#fff" stroke="#444" stroke-width="1.2"/><rect x="3.5" y="11.5" width="33.5" height="3" fill="#3a6fd0"/><circle cx="10.0" cy="22.0" r="6" fill="#d2d2d2"/><circle cx="10.0" cy="19.5" r="3.2" fill="#888"/><path d="M4.0 28.9 A6 5.399999999999999 0 0 1 16.0 28.9 Z" fill="#888"/><rect x="18.5" y="17.0" width="4" height="0.8" fill="#777"/><rect x="18.5" y="19.5" width="6" height="0.8" fill="#777"/><rect x="18.5" y="22.0" width="4" height="0.8" fill="#777"/><rect x="18.5" y="26.0" width="8" height="0.8" fill="#777"/></svg>
<div class="a" style="left:176px;top:445px;width:40px;height:40px;background:#f5f6fa;border-radius:6px;"></div>
<svg style="left:176px;top:445px;" width="40" height="40" viewBox="0 0 40 40"><rect x="3.5" y="13" width="34.0" height="15.5" rx="1.5" fill="#e7f0fb" stroke="#4a78c8" stroke-width="1.2"/><rect x="8.5" y="15.5" width="4" height="0.8" fill="#777"/><rect x="8.5" y="18" width="6" height="0.8" fill="#777"/><rect x="8.5" y="20.5" width="4" height="0.8" fill="#777"/><rect x="8.5" y="24.5" width="8" height="0.8" fill="#777"/></svg>
<div class="a" style="left:224px;top:445px;width:40px;height:40px;background:#f5f6fa;border-radius:6px;"></div>
<svg style="left:224px;top:445px;" width="40" height="40" viewBox="0 0 40 40"><rect x="3.5" y="11.5" width="33.5" height="18.0" rx="0" fill="#eaf4ea" stroke="#3a9a5a" stroke-width="1.2"/><rect x="3.5" y="11.5" width="33.5" height="3" fill="#fff"/><rect x="8.5" y="17.0" width="4" height="0.8" fill="#777"/><rect x="8.5" y="19.5" width="6" height="0.8" fill="#777"/><rect x="8.5" y="22.0" width="4" height="0.8" fill="#777"/><rect x="8.5" y="26.0" width="8" height="0.8" fill="#777"/><path d="M3.5 14.5 H37" stroke="#3a9a5a" stroke-width="1"/></svg>
<div class="a" style="left:80px;top:493px;width:40px;height:40px;background:#f5f6fa;border-radius:6px;"></div>
<svg style="left:80px;top:493px;" width="40" height="40" viewBox="0 0 40 40"><rect x="10" y="3.5" width="21" height="33" rx="0" fill="#fff" stroke="#444" stroke-width="1.3"/><rect x="12.5" y="6" width="16" height="13" fill="#d2d2d2"/><circle cx="20.5" cy="10.5" r="3.6" fill="#888"/><path d="M13.5 19 A7 4.5 0 0 1 27.5 19 Z" fill="#888"/><rect x="13" y="21.5" width="4" height="0.8" fill="#777"/><rect x="13" y="24.5" width="6" height="0.8" fill="#777"/><rect x="13" y="27.5" width="4" height="0.8" fill="#777"/><rect x="13" y="31.5" width="8" height="0.8" fill="#777"/></svg>
<div class="a" style="left:128px;top:493px;width:40px;height:40px;background:#f5f6fa;border-radius:6px;"></div>
<svg style="left:128px;top:493px;" width="40" height="40" viewBox="0 0 40 40"><rect x="9.5" y="3.5" width="21.5" height="33" rx="0" fill="#fff" stroke="#444" stroke-width="1.3"/><circle cx="20.25" cy="12.5" r="7" fill="#d2d2d2"/><circle cx="20.25" cy="10.5" r="3.6" fill="#888"/><path d="M13.25 18.5 A7 4.0 0 0 1 27.25 18.5 Z" fill="#888"/><rect x="12.5" y="21.5" width="4" height="0.8" fill="#777"/><rect x="12.5" y="24.5" width="6" height="0.8" fill="#777"/><rect x="12.5" y="27.5" width="4" height="0.8" fill="#777"/><rect x="12.5" y="31.5" width="8" height="0.8" fill="#777"/></svg>
<div class="a" style="left:176px;top:493px;width:40px;height:40px;background:#f5f6fa;border-radius:6px;"></div>
<svg style="left:176px;top:493px;" width="40" height="40" viewBox="0 0 40 40"><rect x="10" y="3.5" width="21" height="33" rx="2.5" fill="#fff" stroke="#444" stroke-width="1.3"/><rect x="12.5" y="6" width="16" height="13" fill="#d2d2d2"/><circle cx="20.5" cy="10.5" r="3.6" fill="#888"/><path d="M13.5 19 A7 4.5 0 0 1 27.5 19 Z" fill="#888"/><rect x="13" y="21.5" width="4" height="0.8" fill="#777"/><rect x="13" y="24.5" width="6" height="0.8" fill="#777"/><rect x="13" y="27.5" width="4" height="0.8" fill="#777"/><rect x="13" y="31.5" width="8" height="0.8" fill="#777"/></svg>
<div class="a" style="left:224px;top:493px;width:40px;height:40px;background:#f5f6fa;border-radius:6px;"></div>
<svg style="left:224px;top:493px;" width="40" height="40" viewBox="0 0 40 40"><rect x="10" y="3.5" width="21" height="33" rx="2.5" fill="#fff" stroke="#444" stroke-width="1.3"/><circle cx="20.5" cy="12.5" r="7" fill="#d2d2d2"/><circle cx="20.5" cy="10.5" r="3.6" fill="#888"/><path d="M13.5 18.5 A7 4.0 0 0 1 27.5 18.5 Z" fill="#888"/><rect x="13" y="21.5" width="4" height="0.8" fill="#777"/><rect x="13" y="24.5" width="6" height="0.8" fill="#777"/><rect x="13" y="27.5" width="4" height="0.8" fill="#777"/><rect x="13" y="31.5" width="8" height="0.8" fill="#777"/></svg>
<div class="a" style="left:80px;top:541px;width:40px;height:40px;background:#f5f6fa;border-radius:6px;"></div>
<svg style="left:80px;top:541px;" width="40" height="40" viewBox="0 0 40 40"><g fill="#b8f0b8"><circle cx="14" cy="12" r="6"/><circle cx="22" cy="9" r="6"/><circle cx="29" cy="14" r="6"/><circle cx="9" cy="19" r="5.5"/><circle cx="31" cy="21" r="5"/><circle cx="20" cy="18" r="9"/><circle cx="13" cy="23" r="5"/><circle cx="27" cy="24" r="5"/></g><path d="M9.5 35 L17 23 L19 26 L21 22 L23 24 L24 22 L29 35 L25 34 L22 35.5 L20 34 L16 35.5 Z" fill="#e07a2e"/></svg>
<div class="a" style="left:128px;top:541px;width:40px;height:40px;background:#f5f6fa;border-radius:6px;"></div>
<svg style="left:128px;top:541px;" width="40" height="40" viewBox="0 0 40 40"><g fill="#d6f7c6"><path d="M17 38 Q19 31 18 26 L13 20 L15 19 L19 23 L19 15 L21 15 L21.5 22 L27 18 L28 19.5 L22 25 Q21 31 23 38 Z"/><ellipse cx="20" cy="20" rx="13" ry="9" opacity="0.55"/><circle cx="9" cy="20" r="3.5"/><circle cx="31" cy="20" r="3.5"/><circle cx="13" cy="13" r="3.5"/><circle cx="27" cy="13" r="3.5"/><circle cx="20" cy="10" r="3.5"/><circle cx="6" cy="27" r="2.5"/><circle cx="34" cy="27" r="2.5"/><circle cx="16" cy="19" r="2.5"/><circle cx="24" cy="19" r="2.5"/></g></svg>
<div class="a" style="left:176px;top:541px;width:40px;height:40px;background:#f5f6fa;border-radius:6px;"></div>
<svg style="left:176px;top:541px;" width="40" height="40" viewBox="0 0 40 40"><g fill="#c9dea5"><ellipse cx="20" cy="21" rx="16.5" ry="7"/><ellipse cx="21" cy="14.5" rx="9" ry="5.5"/><ellipse cx="9" cy="23" rx="6" ry="4.5"/><ellipse cx="31" cy="23" rx="6" ry="4.5"/></g><g fill="#a9c98a"><ellipse cx="14" cy="19" rx="3" ry="2"/><ellipse cx="24" cy="16" rx="3" ry="2"/><ellipse cx="30" cy="24" rx="2.5" ry="1.6"/></g><path d="M19 33 V25 L16 21.5 M21 33 V21" stroke="#aaa" stroke-width="2.2" fill="none"/></svg>
<div class="a" style="left:224px;top:541px;width:40px;height:40px;background:#f5f6fa;border-radius:6px;"></div>
<svg style="left:224px;top:541px;" width="40" height="40" viewBox="0 0 40 40"><g fill="#5aa55a"><circle cx="16" cy="11" r="6"/><circle cx="25" cy="10" r="6"/><circle cx="31" cy="17" r="5.5"/><circle cx="9" cy="17" r="5.5"/><circle cx="20" cy="17" r="8"/><circle cx="13" cy="22" r="4.5"/><circle cx="27" cy="22" r="4.5"/></g><path d="M19 38 L20.5 24 L16 7.5 M20.5 24 L29 20 M19.8 22 L10 18" stroke="#5a2a2a" stroke-width="1.4" fill="none"/><path d="M18 38.5 L20 22 L21.5 22 L23 38.5 Z" fill="#5a2a2a"/></svg>
<div class="a" style="left:80px;top:589px;width:40px;height:40px;background:#f5f6fa;border-radius:6px;"></div>
<svg style="left:80px;top:589px;" width="40" height="40" viewBox="0 0 40 40"><path d="M20 36 V10 M20 24 L11 18 M20 21 L28 15 M20 15 L15 8 M20 18 L25 10 M20 29 L15 26" stroke="#9a8a68" stroke-width="1.6" fill="none"/><g fill="#9ab870"><circle cx="11" cy="17" r="1.6"/><circle cx="15" cy="8" r="1.6"/><circle cx="25" cy="9" r="1.6"/><circle cx="28" cy="14" r="1.6"/><circle cx="14" cy="25" r="1.5"/><circle cx="23" cy="13" r="1.4"/><circle cx="18" cy="12" r="1.3"/><circle cx="24" cy="19" r="1.3"/><circle cx="16" cy="21" r="1.3"/><circle cx="29" cy="22" r="1.3"/><circle cx="12" cy="11" r="1.3"/></g></svg>
<div class="a" style="left:128px;top:589px;width:40px;height:40px;background:#f5f6fa;border-radius:6px;"></div>
<svg style="left:128px;top:589px;" width="40" height="40" viewBox="0 0 40 40"><path d="M20.4 4.5 L23.2 11.5 L21.8 11.8 L26.3 17.5 L24.3 17.8 L29 23.5 L26.8 23.8 L31 28.8 L22.5 28 L21 28.8 H19.8 L18.3 28 L9.8 28.8 L14 23.8 L11.8 23.5 L16.5 17.8 L14.5 17.5 L19 11.8 L17.6 11.5 Z" fill="#3e6a3e"/><rect x="19.6" y="28" width="1.6" height="8" fill="#9a8a68"/></svg>
<svg style="left:81px;top:651px;" width="7" height="4" viewBox="0 0 7 4"><path d="M0 0 H7 L3.5 4 Z" fill="#666"/></svg>
<div class="t" style="transform:scaleX(0.722);transform-origin:0 0;left:92px;top:646px;font-size:12px;line-height:12px;color:#1677ff;">ジェノグラム</div>
<svg style="left:250px;top:646px;" width="12" height="13" viewBox="0 0 12 13"><rect x="0.6" y="0.6" width="10.8" height="9.8" rx="1.2" fill="none" stroke="#333" stroke-width="1.1"/><circle cx="6" cy="4.2" r="1.8" fill="none" stroke="#333" stroke-width="1"/><path d="M2.8 9.6 A3.2 3 0 0 1 9.2 9.6" fill="none" stroke="#333" stroke-width="1"/><path d="M2 12.3 H10" stroke="#333" stroke-width="1"/></svg>
<div class="a" style="left:80px;top:673px;width:40px;height:40px;background:#f5f6fa;border-radius:6px;"></div>
<svg style="left:80px;top:673px;" width="40" height="40" viewBox="0 0 40 40"><g transform="translate(0.5 0.5)"><rect x="5" y="5" width="30" height="30" fill="#f9f9f9" stroke="#444" stroke-width="1"/><rect x="7.5" y="7.5" width="25" height="25" rx="1" fill="#f9f9f9" stroke="#444" stroke-width="1"/></g></svg>
<div class="a" style="left:128px;top:673px;width:40px;height:40px;background:#f5f6fa;border-radius:6px;"></div>
<svg style="left:128px;top:673px;" width="40" height="40" viewBox="0 0 40 40"><g transform="translate(0.5 0.5)"><rect x="6.5" y="5" width="30" height="30" fill="#f9f9f9" stroke="#444" stroke-width="1"/></g></svg>
<div class="a" style="left:176px;top:673px;width:40px;height:40px;background:#f5f6fa;border-radius:6px;"></div>
<svg style="left:176px;top:673px;" width="40" height="40" viewBox="0 0 40 40"><g transform="translate(0.5 0.5)"><circle cx="20" cy="20" r="15" fill="#f9f9f9" stroke="#444" stroke-width="1"/></g></svg>
<div class="a" style="left:224px;top:673px;width:40px;height:40px;background:#f5f6fa;border-radius:6px;"></div>
<svg style="left:224px;top:673px;" width="40" height="40" viewBox="0 0 40 40"><g transform="translate(0.5 0.5)"><text x="10" y="11" font-size="5" fill="#aaa" font-family="Liberation Sans">1970</text><path d="M22 10 H28" stroke="#aaa" stroke-width="0.8"/><rect x="17" y="17" width="19.5" height="19" fill="#f9f9f9" stroke="#444" stroke-width="1" stroke="#777"/><text x="20.5" y="30.5" font-size="8.5" font-weight="bold" fill="#333" font-family="Liberation Sans">47</text></g></svg>
<div class="a" style="left:80px;top:721px;width:40px;height:40px;background:#f5f6fa;border-radius:6px;"></div>
<svg style="left:80px;top:721px;" width="40" height="40" viewBox="0 0 40 40"><g transform="translate(0.5 0.5)"><text x="6" y="11" font-size="5" fill="#aaa" font-family="Liberation Sans">1970</text><path d="M18 10 H24" stroke="#aaa" stroke-width="0.8"/><circle cx="23.5" cy="25" r="9.5" fill="#f9f9f9" stroke="#444" stroke-width="1" stroke="#888"/><text x="18.3" y="28.3" font-size="8.5" font-weight="bold" fill="#333" font-family="Liberation Sans">47</text></g></svg>
<div class="a" style="left:128px;top:721px;width:40px;height:40px;background:#f5f6fa;border-radius:6px;"></div>
<svg style="left:128px;top:721px;" width="40" height="40" viewBox="0 0 40 40"><g transform="translate(0.5 0.5)"><rect x="5" y="5" width="30" height="30" fill="#f9f9f9" stroke="#444" stroke-width="1"/><path d="M5 5 L35 35 M35 5 L5 35" stroke="#444" stroke-width="0.9" fill="none"/></g></svg>
<div class="a" style="left:176px;top:721px;width:40px;height:40px;background:#f5f6fa;border-radius:6px;"></div>
<svg style="left:176px;top:721px;" width="40" height="40" viewBox="0 0 40 40"><g transform="translate(0.5 0.5)"><circle cx="20" cy="20" r="14.8" fill="#f9f9f9" stroke="#444" stroke-width="1"/><path d="M9.5 9.5 L30.5 30.5 M30.5 9.5 L9.5 30.5" stroke="#444" stroke-width="0.9" fill="none"/></g></svg>
<div class="a" style="left:224px;top:721px;width:40px;height:40px;background:#f5f6fa;border-radius:6px;"></div>
<svg style="left:224px;top:721px;" width="40" height="40" viewBox="0 0 40 40"><g transform="translate(0.5 0.5)"><rect x="5" y="5" width="30" height="30" fill="#f9f9f9" stroke="#444" stroke-width="1"/><path d="M5 5 L10 10 M35 5 L30 10 M5 35 L10 30 M35 35 L30 30" stroke="#444" stroke-width="0.9" fill="none"/><text x="10.5" y="26" font-size="14" fill="#222" font-family="Liberation Sans">70</text></g></svg>
<div class="a" style="left:80px;top:769px;width:40px;height:40px;background:#f5f6fa;border-radius:6px;"></div>
<svg style="left:80px;top:769px;" width="40" height="40" viewBox="0 0 40 40"><g transform="translate(0.5 0.5)"><circle cx="20" cy="20" r="15" fill="#f9f9f9" stroke="#444" stroke-width="1"/><path d="M9.4 9.4 L13 13 M30.6 9.4 L27 13 M9.4 30.6 L13 27 M30.6 30.6 L27 27" stroke="#444" stroke-width="0.9" fill="none"/><text x="10.5" y="25.5" font-size="14" fill="#222" font-family="Liberation Sans">70</text></g></svg>
<div class="a" style="left:128px;top:769px;width:40px;height:40px;background:#f5f6fa;border-radius:6px;"></div>
<svg style="left:128px;top:769px;" width="40" height="40" viewBox="0 0 40 40"><g transform="translate(0.5 0.5)"><text x="5" y="11" font-size="4.2" fill="#aaa" font-family="Liberation Sans">1908</text><path d="M15 11 H21" stroke="#aaa" stroke-width="0.9"/><text x="21" y="10.5" font-size="4.2" fill="#aaa" font-family="Liberation Sans">2005</text><rect x="12" y="17" width="16" height="16" fill="#f9f9f9" stroke="#444" stroke-width="1" stroke="#777"/><path d="M12 17 L28 33 M28 17 L12 33" stroke="#999" stroke-width="0.7"/><text x="14.5" y="28.5" font-size="8" fill="#333" font-family="Liberation Sans">68</text></g></svg>
<div class="a" style="left:176px;top:769px;width:40px;height:40px;background:#f5f6fa;border-radius:6px;"></div>
<svg style="left:176px;top:769px;" width="40" height="40" viewBox="0 0 40 40"><g transform="translate(0.5 0.5)"><text x="5" y="11" font-size="4.2" fill="#aaa" font-family="Liberation Sans">1908</text><path d="M15 11 H21" stroke="#aaa" stroke-width="0.9"/><text x="21" y="10.5" font-size="4.2" fill="#aaa" font-family="Liberation Sans">2005</text><circle cx="20" cy="24.5" r="8.5" fill="#f9f9f9" stroke="#444" stroke-width="1" stroke="#888"/><path d="M14 18.5 L26 30.5 M26 18.5 L14 30.5" stroke="#aaa" stroke-width="0.6"/><text x="15.5" y="27.5" font-size="8" fill="#333" font-family="Liberation Sans">68</text></g></svg>
<div class="a" style="left:224px;top:769px;width:40px;height:40px;background:#f5f6fa;border-radius:6px;"></div>
<svg style="left:224px;top:769px;" width="40" height="40" viewBox="0 0 40 40"><g transform="translate(0.5 0.5)"><rect x="5" y="5" width="30" height="30" fill="#f9f9f9" stroke="#444" stroke-width="1"/><path d="M8.5 10 H31.5 L20 30 Z" stroke="#444" stroke-width="0.9" fill="none"/></g></svg>
<div class="a" style="left:80px;top:817px;width:40px;height:40px;background:#f5f6fa;border-radius:6px;"></div>
<svg style="left:80px;top:817px;" width="40" height="40" viewBox="0 0 40 40"><g transform="translate(0.5 0.5)"><circle cx="20" cy="20" r="15" fill="#f9f9f9" stroke="#444" stroke-width="1"/><path d="M11 13 H29 L20 28 Z" stroke="#444" stroke-width="0.9" fill="none"/></g></svg>
<div class="a" style="left:128px;top:817px;width:40px;height:40px;background:#f5f6fa;border-radius:6px;"></div>
<svg style="left:128px;top:817px;" width="40" height="40" viewBox="0 0 40 40"><g transform="translate(0.5 0.5)"><rect x="5.5" y="5" width="30" height="30" fill="#f9f9f9" stroke="#444" stroke-width="1"/><path d="M9.5 10 H30.5 L20 28 Z" fill="none" stroke="#444" stroke-width="0.8" stroke-dasharray="1.5 1"/></g></svg>
<div class="a" style="left:176px;top:817px;width:40px;height:40px;background:#f5f6fa;border-radius:6px;"></div>
<svg style="left:176px;top:817px;" width="40" height="40" viewBox="0 0 40 40"><g transform="translate(0.5 0.5)"><circle cx="20" cy="20" r="15" fill="#f9f9f9" stroke="#444" stroke-width="1"/><path d="M10.5 13 H29.5 L20 28 Z" fill="none" stroke="#444" stroke-width="0.8" stroke-dasharray="1.5 1"/></g></svg>
<div class="a" style="left:224px;top:817px;width:40px;height:40px;background:#f5f6fa;border-radius:6px;"></div>
<svg style="left:224px;top:817px;" width="40" height="40" viewBox="0 0 40 40"><g transform="translate(0.5 0.5)"><circle cx="20" cy="20" r="15.3" fill="#f9f9f9" stroke="#444" stroke-width="1"/><rect x="9.5" y="9" width="21.5" height="21.5" stroke="#444" stroke-width="0.9" fill="none"/></g></svg>
<div class="a" style="left:80px;top:865px;width:40px;height:40px;background:#f5f6fa;border-radius:6px;"></div>
<svg style="left:80px;top:865px;" width="40" height="40" viewBox="0 0 40 40"><g transform="translate(0.5 0.5)"><rect x="5" y="5" width="30" height="30" fill="#f9f9f9" stroke="#444" stroke-width="1"/><circle cx="20" cy="20" r="13" stroke="#444" stroke-width="0.9" fill="none"/></g></svg>
<div class="a" style="left:128px;top:865px;width:40px;height:40px;background:#f5f6fa;border-radius:6px;"></div>
<svg style="left:128px;top:865px;" width="40" height="40" viewBox="0 0 40 40"><g transform="translate(0.5 0.5)"><path d="M5.5 15 L20 5 L34.5 15 V35 H5.5 Z" fill="#f9f9f9" stroke="#444" stroke-width="1"/></g></svg>
<div class="a" style="left:176px;top:865px;width:40px;height:40px;background:#f5f6fa;border-radius:6px;"></div>
<svg style="left:176px;top:865px;" width="40" height="40" viewBox="0 0 40 40"><g transform="translate(0.5 0.5)"><path d="M20 5 L35 20 L20 35 L5 20 Z" fill="#f9f9f9" stroke="#444" stroke-width="1"/></g></svg>
<div class="a" style="left:224px;top:865px;width:40px;height:40px;background:#f5f6fa;border-radius:6px;"></div>
<svg style="left:224px;top:865px;" width="40" height="40" viewBox="0 0 40 40"><g transform="translate(0.5 0.5)"><path d="M20.5 6 L35 34 H6 Z" fill="#f9f9f9" stroke="#444" stroke-width="1"/></g></svg>
<div class="a" style="left:64px;top:913px;width:208px;height:31px;overflow:hidden">
<div class="a" style="left:16px;top:0;width:40px;height:40px;background:#f5f6fa;border-radius:6px"></div><svg style="left:16px;top:0" width="40" height="40"><path d="M6 6 L34 34 M34 6 L6 34 M7 36 L20 9 L33 36" stroke="#999" stroke-width="0.9" fill="none"/></svg>
<div class="a" style="left:64px;top:0;width:40px;height:40px;background:#f5f6fa;border-radius:6px"></div><svg style="left:64px;top:0" width="40" height="40"><path d="M6 6 L34 34 M34 6 L6 34 M7 36 L20 9 L33 36" stroke="#999" stroke-width="0.9" fill="none"/><path d="M4 20 H36" stroke="#aaa" stroke-width="1.5"/></svg>
<div class="a" style="left:112px;top:0;width:40px;height:40px;background:#f5f6fa;border-radius:6px"></div><svg style="left:112px;top:0" width="40" height="40"><path d="M6 6 L34 34 M34 6 L6 34" stroke="#999" stroke-width="0.9" fill="none"/><rect x="11" y="11" width="18" height="19" stroke="#999" stroke-width="0.9" fill="none" stroke="#777"/></svg>
<div class="a" style="left:160px;top:0;width:40px;height:40px;background:#f5f6fa;border-radius:6px"></div><svg style="left:160px;top:0" width="40" height="40"><path d="M6 6 L34 34 M34 6 L6 34" stroke="#999" stroke-width="0.9" fill="none"/><circle cx="20" cy="20" r="11" stroke="#999" stroke-width="0.9" fill="none" stroke="#888"/></svg>
</div>
<div class="a" style="left:64px;top:944px;width:216px;height:1px;background:#ececf0;"></div>
<div class="a" style="left:80px;top:955px;width:184px;height:32px;background:#0a7cff;border-radius:6px;"></div>
<div class="t" style="transform:scaleX(0.817);transform-origin:0 0;left:147px;top:966px;font-size:12px;line-height:12px;color:#fff;">もっと見る</div>
<div class="a" style="left:298px;top:186px;width:1581px;height:783px;overflow:hidden"><svg style="left:-298px;top:-186px" width="1928" height="1040"><rect x="870.5" y="386.5" width="406" height="347.5" rx="16" ry="16" fill="none" stroke="#111" stroke-width="2.2" stroke-dasharray="4.4 11.23" stroke-dashoffset="-0.5"/><rect x="797.5" y="412.5" width="59" height="60" fill="#f9f9f9" stroke="#000" stroke-width="2"/><path d="M797.5 412.5 L856.5 472.5 M856.5 412.5 L797.5 472.5" stroke="#000" stroke-width="1.8"/><circle cx="963" cy="442" r="30.5" fill="#f9f9f9" stroke="#000" stroke-width="2"/><path d="M827 472.5 V527 H967 V473" fill="none" stroke="#000" stroke-width="2"/><path d="M881.5 537.7 L898.5 516.6 M895.4 537.7 L912.6 516.6" stroke="#000" stroke-width="2"/><path d="M927.7 527 V604" stroke="#000" stroke-width="1.6"/><circle cx="927.7" cy="634.2" r="30.3" fill="#fff" stroke="#000" stroke-width="1.9"/><circle cx="927.7" cy="634.2" r="22.3" fill="#f9f9f9" stroke="#000" stroke-width="1.9"/><rect x="1153.5" y="417.5" width="59" height="60" fill="#f9f9f9" stroke="#000" stroke-width="2"/><circle cx="1316" cy="445.2" r="31" fill="#f9f9f9" stroke="#000" stroke-width="2"/><path d="M1180.3 477.5 V530.8 H1320 V476" fill="none" stroke="#000" stroke-width="2"/><path d="M1234.2 541.2 L1251.8 519.7 M1248.3 541.2 L1265.8 519.7" stroke="#000" stroke-width="2"/><path d="M1219.5 531 V609" stroke="#000" stroke-width="1.6"/><rect x="1189.5" y="609.5" width="60" height="59" fill="#fff" stroke="#000" stroke-width="2"/><rect x="1195.5" y="614.5" width="48.5" height="49" fill="#f9f9f9" stroke="#000" stroke-width="2"/><path d="M975.9 471 V532 H1168.9 V478" fill="none" stroke="#ea0a45" stroke-width="2" stroke-dasharray="5 6" stroke-dashoffset="1"/><path d="M1078.5 531.5 V607.5" stroke="#000" stroke-width="1.6"/><path d="M1078.5 607.5 L1108.5 662 H1048.5 Z" fill="#f9f9f9" stroke="#000" stroke-width="2" stroke-linejoin="miter"/></svg></div>
<div class="t" style="transform:scaleX(0.730);transform-origin:0 0;left:805px;top:390px;font-size:21px;line-height:21px;color:#111;font-family:'Liberation Mono',sans-serif;-webkit-text-stroke:0;">H2–R4</div>
<div class="t" style="transform:scaleX(0.720);transform-origin:0 0;left:954px;top:434px;font-size:22px;line-height:22px;color:#111;font-family:'Liberation Mono',sans-serif;-webkit-text-stroke:0;">27</div>
<div class="t" style="transform:scaleX(0.720);transform-origin:0 0;left:1174px;top:439px;font-size:22px;line-height:22px;color:#111;font-family:'Liberation Mono',sans-serif;-webkit-text-stroke:0;">29</div>
<div class="t" style="transform:scaleX(0.902);transform-origin:0 0;left:914px;top:692px;font-size:18px;line-height:18px;color:#111;font-family:'Liberation Mono',sans-serif;-webkit-text-stroke:0;">7才</div>
<div class="t" style="letter-spacing:0.00px;left:1060px;top:690px;font-size:18px;line-height:18px;color:#111;-webkit-text-stroke:0;">妊娠</div>
<div class="t" style="transform:scaleX(0.868);transform-origin:0 0;left:1206px;top:692px;font-size:18px;line-height:18px;color:#111;font-family:'Liberation Mono',sans-serif;-webkit-text-stroke:0;">5才</div>
<div class="a" style="left:481px;top:169px;width:264px;height:224px;background:#fff;border-radius:8px;box-shadow:0 0 0 1px rgba(0,0,0,0.035),0 2px 6px rgba(0,0,0,0.07);"></div>
<div class="t" style="transform:scaleX(0.856);transform-origin:0 0;left:497px;top:186px;font-size:12px;line-height:12px;color:#1a1a1a;font-weight:bold;-webkit-text-stroke:0;">テキスト (T, Ctrl+2)</div>
<div class="a" style="left:497px;top:211px;width:232px;height:166px;background:#f9f9fa;border:1px solid #e6e6ea;border-radius:6px;"></div>
<div class="t" style="transform:scaleX(0.742);transform-origin:0 0;left:505px;top:221px;font-size:12px;line-height:12px;color:#222;">ドキュメントにテキストボックスを挿入します。</div>
<div class="t" style="transform:scaleX(0.786);transform-origin:0 0;left:505px;top:251px;font-size:12px;line-height:12px;color:#222;">ページの任意の場所をクリックし、</div>
<div class="t" style="transform:scaleX(0.772);transform-origin:0 0;left:505px;top:266px;font-size:12px;line-height:12px;color:#222;">テキストブロックが必要なサイズになるまでドラッ</div>
<div class="t" style="transform:scaleX(0.700);transform-origin:0 0;left:505px;top:281px;font-size:12px;line-height:12px;color:#222;">グします。</div>
<div class="t" style="transform:scaleX(0.825);transform-origin:0 0;left:505px;top:311px;font-size:12px;line-height:12px;color:#222;">入力が終了したら、テキストボックス以外の任</div>
<div class="t" style="transform:scaleX(0.783);transform-origin:0 0;left:505px;top:326px;font-size:12px;line-height:12px;color:#222;">意のところ</div>
<div class="t" style="transform:scaleX(0.667);transform-origin:0 0;left:505px;top:341px;font-size:12px;line-height:12px;color:#222;">をクリックして、</div>
<div class="t" style="transform:scaleX(0.833);transform-origin:0 0;left:505px;top:356px;font-size:12px;line-height:12px;color:#222;">編集を終了します。</div>
<svg style="left:1816px;top:205px;" width="42" height="42" viewBox="0 0 42 42"><defs><linearGradient id="aig1" x1="0" y1="0" x2="0" y2="1"><stop offset="0" stop-color="#5a9cf5"/><stop offset="1" stop-color="#45b4ff"/></linearGradient>
<linearGradient id="aig2" x1="0" y1="0" x2="0" y2="1"><stop offset="0" stop-color="#ff1fc8"/><stop offset="1" stop-color="#ffd2b0"/></linearGradient></defs>
<circle cx="20.8" cy="20.6" r="19.4" fill="#fff" stroke="#c9dcf3" stroke-width="3"/>
<path d="M12.5 29.5 L18.5 15.2 Q19 14 20.3 14 H23 L16 29.5 Q15.5 30.5 14.5 30.5 H12 Z" fill="url(#aig1)"/>
<path d="M22 14 L26 24 L24 30 L19 20 Z" fill="#2a2fd6"/>
<path d="M25 14 H33 L26.5 30.5 H19.2 Z" fill="url(#aig2)"/>
<path d="M26.8 26 L28 30.5 H25 Z" fill="#3a7bff"/></svg>
<div class="a" style="left:281px;top:984px;width:1612px;height:16px;overflow:hidden"><svg style="left:0;top:0" width="1612" height="16"><rect x="35.00" y="1" width="15" height="14" rx="3" fill="#ae1121"/><rect x="52.34" y="1" width="15" height="14" rx="3" fill="#cc0c33"/><rect x="69.68" y="1" width="15" height="14" rx="3" fill="#e84260"/><rect x="87.02" y="1" width="15" height="14" rx="3" fill="#f26582"/><rect x="104.36" y="1" width="15" height="14" rx="3" fill="#f79dae"/><rect x="121.70" y="1" width="15" height="14" rx="3" fill="#297c8e"/><rect x="139.04" y="1" width="15" height="14" rx="3" fill="#36a4c0"/><rect x="156.38" y="1" width="15" height="14" rx="3" fill="#3dbedb"/><rect x="173.72" y="1" width="15" height="14" rx="3" fill="#5dd6ec"/><rect x="191.06" y="1" width="15" height="14" rx="3" fill="#a6edf8"/><rect x="208.40" y="1" width="15" height="14" rx="3" fill="#f04e23"/><rect x="225.74" y="1" width="15" height="14" rx="3" fill="#fd7a35"/><rect x="243.08" y="1" width="15" height="14" rx="3" fill="#fd931c"/><rect x="260.42" y="1" width="15" height="14" rx="3" fill="#fdb515"/><rect x="277.76" y="1" width="15" height="14" rx="3" fill="#fcc35e"/><rect x="295.10" y="1" width="15" height="14" rx="3" fill="#11907b"/><rect x="312.44" y="1" width="15" height="14" rx="3" fill="#13b198"/><rect x="329.78" y="1" width="15" height="14" rx="3" fill="#18c8a8"/><rect x="347.12" y="1" width="15" height="14" rx="3" fill="#66d6c4"/><rect x="364.46" y="1" width="15" height="14" rx="3" fill="#86eadb"/><rect x="381.80" y="1" width="15" height="14" rx="3" fill="#9a2c5e"/><rect x="399.14" y="1" width="15" height="14" rx="3" fill="#c24e8c"/><rect x="416.48" y="1" width="15" height="14" rx="3" fill="#e064a6"/><rect x="433.82" y="1" width="15" height="14" rx="3" fill="#f78bc9"/><rect x="451.16" y="1" width="15" height="14" rx="3" fill="#f1c3dd"/><rect x="468.50" y="1" width="15" height="14" rx="3" fill="#5d8a1a"/><rect x="485.84" y="1" width="15" height="14" rx="3" fill="#76a22c"/><rect x="503.18" y="1" width="15" height="14" rx="3" fill="#9cbd28"/><rect x="520.52" y="1" width="15" height="14" rx="3" fill="#b2d14a"/><rect x="537.86" y="1" width="15" height="14" rx="3" fill="#d2e191"/><rect x="555.20" y="1" width="15" height="14" rx="3" fill="#2126a6"/><rect x="572.54" y="1" width="15" height="14" rx="3" fill="#3540d8"/><rect x="589.88" y="1" width="15" height="14" rx="3" fill="#6b3fee"/><rect x="607.22" y="1" width="15" height="14" rx="3" fill="#8d6cf4"/><rect x="624.56" y="1" width="15" height="14" rx="3" fill="#ac93f5"/><rect x="641.90" y="1" width="15" height="14" rx="3" fill="#fcc800"/><rect x="659.24" y="1" width="15" height="14" rx="3" fill="#fcdc2c"/><rect x="676.58" y="1" width="15" height="14" rx="3" fill="#efe52e"/><rect x="693.92" y="1" width="15" height="14" rx="3" fill="#f8f24a"/><rect x="711.26" y="1" width="15" height="14" rx="3" fill="#fafd84"/><rect x="728.60" y="1" width="15" height="14" rx="3" fill="#9a55da"/><rect x="745.94" y="1" width="15" height="14" rx="3" fill="#bf4ee0"/><rect x="763.28" y="1" width="15" height="14" rx="3" fill="#d272f2"/><rect x="780.62" y="1" width="15" height="14" rx="3" fill="#bf8af6"/><rect x="797.96" y="1" width="15" height="14" rx="3" fill="#daa7f8"/><rect x="815.30" y="1" width="15" height="14" rx="3" fill="#2e7c43"/><rect x="832.64" y="1" width="15" height="14" rx="3" fill="#3a9e57"/><rect x="849.98" y="1" width="15" height="14" rx="3" fill="#4fab76"/><rect x="867.32" y="1" width="15" height="14" rx="3" fill="#64bb88"/><rect x="884.66" y="1" width="15" height="14" rx="3" fill="#92d6ab"/><rect x="902.00" y="1" width="15" height="14" rx="3" fill="#e5392a"/><rect x="919.34" y="1" width="15" height="14" rx="3" fill="#f94a3d"/><rect x="936.68" y="1" width="15" height="14" rx="3" fill="#f56467"/><rect x="954.02" y="1" width="15" height="14" rx="3" fill="#fc7878"/><rect x="971.36" y="1" width="15" height="14" rx="3" fill="#fd8f87"/><rect x="988.70" y="1" width="15" height="14" rx="3" fill="#2541a1"/><rect x="1006.04" y="1" width="15" height="14" rx="3" fill="#2d55c9"/><rect x="1023.38" y="1" width="15" height="14" rx="3" fill="#3468ea"/><rect x="1040.72" y="1" width="15" height="14" rx="3" fill="#5d8af6"/><rect x="1058.06" y="1" width="15" height="14" rx="3" fill="#8bb0f6"/><rect x="1075.40" y="1" width="15" height="14" rx="3" fill="#712b00"/><rect x="1092.74" y="1" width="15" height="14" rx="3" fill="#963a00"/><rect x="1110.08" y="1" width="15" height="14" rx="3" fill="#a94429"/><rect x="1127.42" y="1" width="15" height="14" rx="3" fill="#cf5d3d"/><rect x="1144.76" y="1" width="15" height="14" rx="3" fill="#e57a5b"/><rect x="1162.10" y="1" width="15" height="14" rx="3" fill="#168ad8"/><rect x="1179.44" y="1" width="15" height="14" rx="3" fill="#2a9cf3"/><rect x="1196.78" y="1" width="15" height="14" rx="3" fill="#43b1f9"/><rect x="1214.12" y="1" width="15" height="14" rx="3" fill="#3dcffa"/><rect x="1231.46" y="1" width="15" height="14" rx="3" fill="#6ae3fb"/><rect x="1248.80" y="1" width="15" height="14" rx="3" fill="#774a32"/><rect x="1266.14" y="1" width="15" height="14" rx="3" fill="#955d41"/><rect x="1283.48" y="1" width="15" height="14" rx="3" fill="#b17252"/><rect x="1300.82" y="1" width="15" height="14" rx="3" fill="#d5855f"/><rect x="1318.16" y="1" width="15" height="14" rx="3" fill="#f19a6c"/><rect x="1335.50" y="1" width="15" height="14" rx="3" fill="#8a7e73"/><rect x="1352.84" y="1" width="15" height="14" rx="3" fill="#b3ab98"/><rect x="1370.18" y="1" width="15" height="14" rx="3" fill="#cdc9b7"/><rect x="1387.52" y="1" width="15" height="14" rx="3" fill="#e5dfd0"/><rect x="1404.86" y="1" width="15" height="14" rx="3" fill="#f5efdf"/><rect x="1422.20" y="1" width="15" height="14" rx="3" fill="#1a1a1a"/><rect x="1439.54" y="1" width="15" height="14" rx="3" fill="#2a2a2a"/><rect x="1456.88" y="1" width="15" height="14" rx="3" fill="#404040"/><rect x="1474.22" y="1" width="15" height="14" rx="3" fill="#585858"/><rect x="1491.56" y="1" width="15" height="14" rx="3" fill="#787878"/><rect x="1508.90" y="1" width="15" height="14" rx="3" fill="#bcbcbc"/><rect x="1526.24" y="1" width="15" height="14" rx="3" fill="#cacaca"/><rect x="1543.58" y="1" width="15" height="14" rx="3" fill="#d8d8d8"/><rect x="1560.92" y="1" width="15" height="14" rx="3" fill="#e6e6e6"/><rect x="1578.26" y="1" width="15" height="14" rx="3" fill="#f3f3f3"/><rect x="1595.60" y="1" width="15" height="14" rx="3" fill="#fff"/></svg></div>
<svg style="left:293px;top:985px;" width="14" height="14" viewBox="0 0 14 14"><path d="M4 0.5 L7 3.5 M1 7.5 L6.5 2 L12 7.5 L6.5 13 Z" fill="none" stroke="#333" stroke-width="1.6" stroke-linejoin="round"/><path d="M1.5 8 H11.5 L6.5 13 Z" fill="#444"/><circle cx="12.5" cy="12" r="1" fill="#444"/></svg>
<svg style="left:307px;top:991px;" width="6" height="3" viewBox="0 0 6 3"><path d="M0 0 H6 L3 3 Z" fill="#555"/></svg>
<svg style="left:1905px;top:177px;" width="14" height="13" viewBox="0 0 14 13"><path d="M7 1 L1.5 6.5 L7 12 M13 1 L7.5 6.5 L13 12" fill="none" stroke="#333" stroke-width="1.8"/></svg>
<div class="a" style="left:1894px;top:200px;width:34px;height:35px;background:#1677ff;"></div>
<svg style="left:1903px;top:207px;" width="20" height="20" viewBox="0 0 20 20"><path d="M1.8 10.5 L9.5 2.8 L17.2 10.5 L9.5 18.2 Z" fill="none" stroke="#fff" stroke-width="2" stroke-linejoin="round"/><path d="M2.5 10.8 H16.5 L9.5 17.8 Z" fill="#fff"/><path d="M5.8 0.8 L9.8 4.6" stroke="#fff" stroke-width="2"/><path d="M17.3 13.6 Q19 16 18.3 17.2 Q17.3 18.4 16.3 17.2 Q15.6 16 17.3 13.6 Z" fill="#fff"/></svg>
<svg style="left:1904px;top:252px;" width="17" height="19" viewBox="0 0 17 19"><path d="M1 1 H11.5 L16 5.5 V18 H1 Z" fill="none" stroke="#333" stroke-width="1.7" stroke-linejoin="round"/><path d="M4 8 H5.5 M7.5 8 H13 M4 11.5 H5.5 M7.5 11.5 H13 M4 15 H5.5 M7.5 15 H13" stroke="#333" stroke-width="1.5"/></svg>
<svg style="left:1903px;top:298px;" width="17" height="17" viewBox="0 0 17 17"><circle cx="8.5" cy="8.5" r="7.6" fill="none" stroke="#333" stroke-width="1.5"/><path d="M6 6.5 A2.5 2.5 0 1 1 9.2 8.8 C8.6 9.1 8.5 9.6 8.5 10.5" fill="none" stroke="#333" stroke-width="1.5"/><circle cx="8.5" cy="12.8" r="0.9" fill="#333"/></svg>
<svg style="left:1903px;top:975px;" width="18" height="18" viewBox="0 0 18 18"><path d="M9 0.8 L10.8 2.6 L13.3 2.1 L14 4.6 L16.4 5.7 L15.6 8.1 L16.9 10.4 L14.8 11.8 L14.5 14.3 L11.9 14.2 L10.2 16.2 L8.1 14.8 L5.6 15.6 L4.6 13.2 L2.2 12.4 L2.6 9.9 L1.1 7.8 L3.1 6.2 L3.5 3.7 L6 3.9 Z" fill="none" stroke="#333" stroke-width="1.6" stroke-linejoin="round"/><circle cx="9" cy="8.7" r="2.7" fill="none" stroke="#333" stroke-width="1.6"/></svg>
<svg style="left:27px;top:1011px;" width="18" height="11" viewBox="0 0 18 11"><path d="M0.8 0 V11 M17.2 0 V11" stroke="#333" stroke-width="1.3"/><rect x="4" y="0.8" width="10" height="9.4" fill="none" stroke="#333" stroke-width="1.4"/></svg>
<div class="a" style="left:56px;top:1005px;width:1px;height:22px;background:#dedfe3;"></div>
<div class="t" style="transform:scaleX(0.836);transform-origin:0 0;left:74px;top:1010px;font-size:12px;line-height:12px;color:#333;">ページ-1</div>
<svg style="left:166px;top:1013px;" width="6" height="4" viewBox="0 0 6 4"><path d="M0 0 H6 L3 4 Z" fill="#666"/></svg>
<div class="a" style="left:185px;top:1005px;width:1px;height:22px;background:#dedfe3;"></div>
<svg style="left:200px;top:1010px;" width="12" height="12" viewBox="0 0 12 12"><path d="M6 0 V12 M0 6 H12" stroke="#333" stroke-width="1.2"/></svg>
<div class="a" style="left:228px;top:1005px;width:1px;height:22px;background:#dedfe3;"></div>
<div class="t" style="transform:scaleX(0.900);transform-origin:0 0;left:243px;top:1010px;font-size:12px;line-height:12px;color:#1677ff;">ページ-1</div>
<div class="a" style="left:299px;top:1005px;width:1px;height:22px;background:#dedfe3;"></div>
<div class="a" style="left:1329px;top:1005px;width:1px;height:22px;background:#dedfe3;"></div>
<div class="t" style="transform:scaleX(0.889);transform-origin:0 0;left:1339px;top:1010px;font-size:12px;line-height:12px;color:#333;">図形の個数：</div>
<div class="t" style="transform:scaleX(0.899);transform-origin:0 0;left:1411px;top:1011px;font-size:12px;line-height:12px;color:#333;">71.5</div>
<div class="a" style="left:1443px;top:1005px;width:1px;height:22px;background:#dedfe3;"></div>
<svg style="left:1452px;top:1008px;" width="17" height="16" viewBox="0 0 17 16"><path d="M8.5 1 L16 5.5 L8.5 10 L1 5.5 Z" fill="none" stroke="#333" stroke-width="1.3" stroke-linejoin="round"/><path d="M1 9 L8.5 13.5 L16 9" fill="none" stroke="#333" stroke-width="1.3"/></svg>
<svg style="left:1474px;top:1015px;" width="6" height="3" viewBox="0 0 6 3"><path d="M0 0 H6 L3 3 Z" fill="#888"/></svg>
<svg style="left:1495px;top:1009px;" width="15" height="15" viewBox="0 0 15 15"><path d="M1 4.5 V1 H4.5 M10.5 1 H14 V4.5 M14 10.5 V14 H10.5 M4.5 14 H1 V10.5" fill="none" stroke="#333" stroke-width="1.4"/><rect x="5" y="4.5" width="5" height="6" fill="none" stroke="#333" stroke-width="1.3"/></svg>
<div class="t" style="transform:scaleX(0.903);transform-origin:0 0;left:1520px;top:1010px;font-size:12px;line-height:12px;color:#333;">全画面モード</div>
<svg style="left:1597px;top:1008px;" width="16" height="16" viewBox="0 0 16 16"><circle cx="8" cy="8" r="7.3" fill="none" stroke="#333" stroke-width="1.2"/><path d="M6.3 4.8 L11 8 L6.3 11.2 Z" fill="none" stroke="#333" stroke-width="1.2" stroke-linejoin="round"/></svg>
<div class="a" style="left:1623px;top:1005px;width:1px;height:22px;background:#dedfe3;"></div>
<svg style="left:1635px;top:1015px;" width="11" height="2" viewBox="0 0 11 2"><rect width="11" height="1.3" fill="#333"/></svg>
<div class="a" style="left:1658px;top:1016px;width:96px;height:2px;background:#fff;border-radius:1px;"></div>
<div class="a" style="left:1658px;top:1015px;width:30px;height:3px;background:#333;border-radius:1.5px;"></div>
<svg style="left:1678px;top:1008px;" width="16" height="16" viewBox="0 0 16 16"><circle cx="8" cy="8" r="6.3" fill="#fff" stroke="#333" stroke-width="2.2"/></svg>
<svg style="left:1765px;top:1010px;" width="11" height="11" viewBox="0 0 11 11"><path d="M5.5 0 V11 M0 5.5 H11" stroke="#333" stroke-width="1.3"/></svg>
<div class="t" style="letter-spacing:0.22px;left:1794px;top:1011px;font-size:11px;line-height:11px;color:#444;">110%</div>
<svg style="left:1832px;top:1015px;" width="6" height="3" viewBox="0 0 6 3"><path d="M0 0 H6 L3 3 Z" fill="#888"/></svg>
<div class="a" style="left:1847px;top:1005px;width:1px;height:22px;background:#dedfe3;"></div>
<svg style="left:1861px;top:1009px;" width="14" height="14" viewBox="0 0 14 14"><path d="M0.8 4 V0.8 H4 M10 0.8 H13.2 V4 M13.2 10 V13.2 H10 M4 13.2 H0.8 V10" fill="none" stroke="#333" stroke-width="1.4"/><rect x="4" y="4.5" width="6" height="5" fill="none" stroke="#333" stroke-width="1.3"/></svg>
<svg style="left:1893px;top:1009px;" width="14" height="14" viewBox="0 0 14 14"><rect x="0.7" y="0.7" width="12.6" height="12.6" fill="none" stroke="#333" stroke-width="1.3"/><path d="M3 7 H11 M4.8 5.2 L3 7 L4.8 8.8 M9.2 5.2 L11 7 L9.2 8.8" fill="none" stroke="#333" stroke-width="1.1"/></svg></body></html>
